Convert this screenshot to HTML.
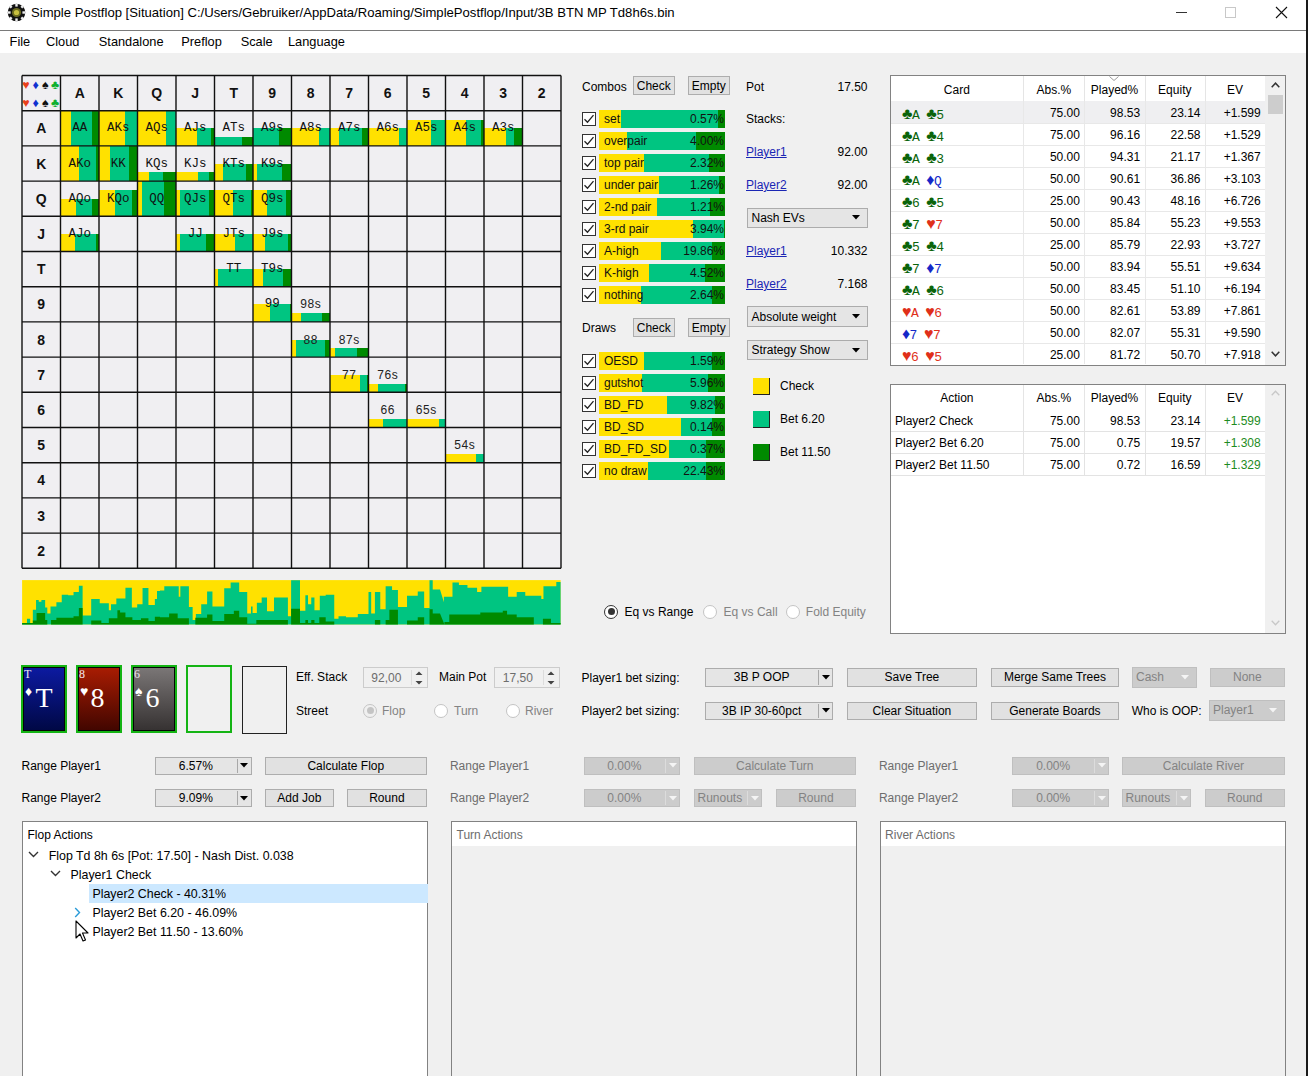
<!DOCTYPE html><html><head><meta charset="utf-8"><style>
html,body{margin:0;padding:0;width:1308px;height:1080px;overflow:hidden;background:#fff;}
body{position:relative;font-family:"Liberation Sans",sans-serif;}
div{box-sizing:border-box;}
</style></head><body>
<div style="position:absolute;left:0px;top:53px;width:1306px;height:1023px;background:#f0f0f0;"></div>
<div style="position:absolute;left:1306px;top:0px;width:2px;height:1076px;background:#1a1a1a;"></div>
<div style="position:absolute;left:0px;top:30px;width:1306px;height:1px;background:#7a7a7a;"></div>
<svg style="position:absolute;left:7px;top:3px" width="19" height="19" viewBox="0 0 19 19">
<circle cx="9.5" cy="9.5" r="8.8" fill="#111"/>
<g fill="#eee"><rect x="8.3" y="0.6" width="2.4" height="3"/><rect x="8.3" y="15.4" width="2.4" height="3"/>
<rect x="0.6" y="8.3" width="3" height="2.4"/><rect x="15.4" y="8.3" width="3" height="2.4"/>
<rect x="2.6" y="2.6" width="2.4" height="2.4" transform="rotate(45 3.8 3.8)"/><rect x="14" y="2.6" width="2.4" height="2.4" transform="rotate(45 15.2 3.8)"/>
<rect x="2.6" y="14" width="2.4" height="2.4" transform="rotate(45 3.8 15.2)"/><rect x="14" y="14" width="2.4" height="2.4" transform="rotate(45 15.2 15.2)"/></g>
<circle cx="9.5" cy="9.5" r="4.6" fill="#6a6a20"/><circle cx="9.5" cy="9.5" r="2.6" fill="#c8c040"/>
</svg>
<div style="position:absolute;left:31px;top:3.0px;height:20px;line-height:20px;font-family:'Liberation Sans', sans-serif;font-size:13.1px;color:#000;font-weight:400;white-space:pre;">Simple Postflop [Situation] C:/Users/Gebruiker/AppData/Roaming/SimplePostflop/Input/3B BTN MP Td8h6s.bin</div>
<div style="position:absolute;left:1176px;top:12px;width:11px;height:1px;background:#333;"></div>
<div style="position:absolute;left:1225px;top:7px;width:11px;height:11px;border:1px solid #c8c8c8;"></div>
<svg style="position:absolute;left:1275px;top:6px" width="13" height="13" viewBox="0 0 13 13"><path d="M1 1L12 12M12 1L1 12" stroke="#111" stroke-width="1.1"/></svg>
<div style="position:absolute;left:9.6px;top:32.0px;height:20px;line-height:20px;font-family:'Liberation Sans', sans-serif;font-size:12.8px;color:#000;font-weight:400;white-space:pre;">File</div>
<div style="position:absolute;left:46px;top:32.0px;height:20px;line-height:20px;font-family:'Liberation Sans', sans-serif;font-size:12.8px;color:#000;font-weight:400;white-space:pre;">Cloud</div>
<div style="position:absolute;left:98.8px;top:32.0px;height:20px;line-height:20px;font-family:'Liberation Sans', sans-serif;font-size:12.8px;color:#000;font-weight:400;white-space:pre;">Standalone</div>
<div style="position:absolute;left:181.3px;top:32.0px;height:20px;line-height:20px;font-family:'Liberation Sans', sans-serif;font-size:12.8px;color:#000;font-weight:400;white-space:pre;">Preflop</div>
<div style="position:absolute;left:240.7px;top:32.0px;height:20px;line-height:20px;font-family:'Liberation Sans', sans-serif;font-size:12.8px;color:#000;font-weight:400;white-space:pre;">Scale</div>
<div style="position:absolute;left:288px;top:32.0px;height:20px;line-height:20px;font-family:'Liberation Sans', sans-serif;font-size:12.8px;color:#000;font-weight:400;white-space:pre;">Language</div>
<div style="position:absolute;left:22.0px;top:75.5px;width:539.0px;height:492.80000000000007px;background:#f0eff2;"></div>
<div style="position:absolute;left:60.5px;top:110.7px;width:38.5px;height:35.2px;background:#008a00;"></div>
<div style="position:absolute;left:60.5px;top:110.7px;width:31.95px;height:35.2px;background:#00c581;"></div>
<div style="position:absolute;left:60.5px;top:110.7px;width:10.78px;height:35.2px;background:#ffe100;"></div>
<div style="position:absolute;left:99.0px;top:110.7px;width:38.5px;height:35.2px;background:#008a00;"></div>
<div style="position:absolute;left:99.0px;top:110.7px;width:38.12px;height:35.2px;background:#00c581;"></div>
<div style="position:absolute;left:99.0px;top:110.7px;width:25.8px;height:35.2px;background:#ffe100;"></div>
<div style="position:absolute;left:137.5px;top:110.7px;width:38.5px;height:35.2px;background:#00c581;"></div>
<div style="position:absolute;left:137.5px;top:110.7px;width:28.88px;height:35.2px;background:#ffe100;"></div>
<div style="position:absolute;left:176.0px;top:128.3px;width:38.5px;height:17.6px;background:#008a00;"></div>
<div style="position:absolute;left:176.0px;top:128.3px;width:35.42px;height:17.6px;background:#00c581;"></div>
<div style="position:absolute;left:176.0px;top:128.3px;width:20.79px;height:17.6px;background:#ffe100;"></div>
<div style="position:absolute;left:214.5px;top:137.1px;width:38.5px;height:8.8px;background:#008a00;"></div>
<div style="position:absolute;left:214.5px;top:137.1px;width:27.72px;height:8.8px;background:#00c581;"></div>
<div style="position:absolute;left:253.0px;top:128.3px;width:38.5px;height:17.6px;background:#008a00;"></div>
<div style="position:absolute;left:253.0px;top:128.3px;width:26.18px;height:17.6px;background:#00c581;"></div>
<div style="position:absolute;left:291.5px;top:128.3px;width:38.5px;height:17.6px;background:#00c581;"></div>
<div style="position:absolute;left:291.5px;top:128.3px;width:27.33px;height:17.6px;background:#ffe100;"></div>
<div style="position:absolute;left:330.0px;top:128.3px;width:38.5px;height:17.6px;background:#008a00;"></div>
<div style="position:absolute;left:330.0px;top:128.3px;width:31.95px;height:17.6px;background:#00c581;"></div>
<div style="position:absolute;left:330.0px;top:128.3px;width:9.24px;height:17.6px;background:#ffe100;"></div>
<div style="position:absolute;left:368.5px;top:128.3px;width:38.5px;height:17.6px;background:#00c581;"></div>
<div style="position:absolute;left:368.5px;top:128.3px;width:30.8px;height:17.6px;background:#ffe100;"></div>
<div style="position:absolute;left:407.0px;top:119.5px;width:38.5px;height:26.4px;background:#00c581;"></div>
<div style="position:absolute;left:407.0px;top:119.5px;width:23.87px;height:26.4px;background:#ffe100;"></div>
<div style="position:absolute;left:445.5px;top:119.5px;width:38.5px;height:26.4px;background:#008a00;"></div>
<div style="position:absolute;left:445.5px;top:119.5px;width:35.42px;height:26.4px;background:#00c581;"></div>
<div style="position:absolute;left:445.5px;top:119.5px;width:20.79px;height:26.4px;background:#ffe100;"></div>
<div style="position:absolute;left:484.0px;top:128.3px;width:38.5px;height:17.6px;background:#008a00;"></div>
<div style="position:absolute;left:484.0px;top:128.3px;width:30.42px;height:17.6px;background:#00c581;"></div>
<div style="position:absolute;left:484.0px;top:128.3px;width:21.56px;height:17.6px;background:#ffe100;"></div>
<div style="position:absolute;left:60.5px;top:145.9px;width:38.5px;height:35.2px;background:#008a00;"></div>
<div style="position:absolute;left:60.5px;top:145.9px;width:35.04px;height:35.2px;background:#00c581;"></div>
<div style="position:absolute;left:60.5px;top:145.9px;width:18.09px;height:35.2px;background:#ffe100;"></div>
<div style="position:absolute;left:99.0px;top:145.9px;width:38.5px;height:35.2px;background:#008a00;"></div>
<div style="position:absolute;left:99.0px;top:145.9px;width:30.03px;height:35.2px;background:#00c581;"></div>
<div style="position:absolute;left:99.0px;top:145.9px;width:10.78px;height:35.2px;background:#ffe100;"></div>
<div style="position:absolute;left:137.5px;top:172.3px;width:38.5px;height:8.8px;background:#008a00;"></div>
<div style="position:absolute;left:137.5px;top:172.3px;width:25.8px;height:8.8px;background:#00c581;"></div>
<div style="position:absolute;left:137.5px;top:172.3px;width:11.94px;height:8.8px;background:#ffe100;"></div>
<div style="position:absolute;left:176.0px;top:172.3px;width:38.5px;height:8.8px;background:#008a00;"></div>
<div style="position:absolute;left:176.0px;top:172.3px;width:33.11px;height:8.8px;background:#00c581;"></div>
<div style="position:absolute;left:176.0px;top:172.3px;width:21.94px;height:8.8px;background:#ffe100;"></div>
<div style="position:absolute;left:214.5px;top:163.5px;width:38.5px;height:17.6px;background:#008a00;"></div>
<div style="position:absolute;left:214.5px;top:163.5px;width:31.19px;height:17.6px;background:#00c581;"></div>
<div style="position:absolute;left:214.5px;top:163.5px;width:8.47px;height:17.6px;background:#ffe100;"></div>
<div style="position:absolute;left:253.0px;top:163.5px;width:38.5px;height:17.6px;background:#008a00;"></div>
<div style="position:absolute;left:253.0px;top:163.5px;width:28.88px;height:17.6px;background:#00c581;"></div>
<div style="position:absolute;left:253.0px;top:163.5px;width:4.24px;height:17.6px;background:#ffe100;"></div>
<div style="position:absolute;left:60.5px;top:198.7px;width:38.5px;height:17.6px;background:#008a00;"></div>
<div style="position:absolute;left:60.5px;top:198.7px;width:31.19px;height:17.6px;background:#00c581;"></div>
<div style="position:absolute;left:60.5px;top:198.7px;width:15.78px;height:17.6px;background:#ffe100;"></div>
<div style="position:absolute;left:99.0px;top:189.9px;width:38.5px;height:26.4px;background:#008a00;"></div>
<div style="position:absolute;left:99.0px;top:189.9px;width:33.11px;height:26.4px;background:#00c581;"></div>
<div style="position:absolute;left:99.0px;top:189.9px;width:16.17px;height:26.4px;background:#ffe100;"></div>
<div style="position:absolute;left:137.5px;top:181.1px;width:38.5px;height:35.2px;background:#008a00;"></div>
<div style="position:absolute;left:137.5px;top:181.1px;width:26.56px;height:35.2px;background:#00c581;"></div>
<div style="position:absolute;left:137.5px;top:181.1px;width:4.24px;height:35.2px;background:#ffe100;"></div>
<div style="position:absolute;left:176.0px;top:189.9px;width:38.5px;height:26.4px;background:#008a00;"></div>
<div style="position:absolute;left:176.0px;top:189.9px;width:33.11px;height:26.4px;background:#00c581;"></div>
<div style="position:absolute;left:176.0px;top:189.9px;width:3.85px;height:26.4px;background:#ffe100;"></div>
<div style="position:absolute;left:214.5px;top:189.9px;width:38.5px;height:26.4px;background:#008a00;"></div>
<div style="position:absolute;left:214.5px;top:189.9px;width:36.19px;height:26.4px;background:#00c581;"></div>
<div style="position:absolute;left:214.5px;top:189.9px;width:18.09px;height:26.4px;background:#ffe100;"></div>
<div style="position:absolute;left:253.0px;top:189.9px;width:38.5px;height:26.4px;background:#008a00;"></div>
<div style="position:absolute;left:253.0px;top:189.9px;width:33.11px;height:26.4px;background:#00c581;"></div>
<div style="position:absolute;left:253.0px;top:189.9px;width:13.86px;height:26.4px;background:#ffe100;"></div>
<div style="position:absolute;left:60.5px;top:233.9px;width:38.5px;height:17.6px;background:#008a00;"></div>
<div style="position:absolute;left:60.5px;top:233.9px;width:35.04px;height:17.6px;background:#00c581;"></div>
<div style="position:absolute;left:60.5px;top:233.9px;width:14.24px;height:17.6px;background:#ffe100;"></div>
<div style="position:absolute;left:176.0px;top:233.9px;width:38.5px;height:17.6px;background:#008a00;"></div>
<div style="position:absolute;left:176.0px;top:233.9px;width:30.03px;height:17.6px;background:#00c581;"></div>
<div style="position:absolute;left:176.0px;top:233.9px;width:3.85px;height:17.6px;background:#ffe100;"></div>
<div style="position:absolute;left:214.5px;top:233.9px;width:38.5px;height:17.6px;background:#00c581;"></div>
<div style="position:absolute;left:214.5px;top:233.9px;width:20.02px;height:17.6px;background:#ffe100;"></div>
<div style="position:absolute;left:253.0px;top:233.9px;width:38.5px;height:17.6px;background:#008a00;"></div>
<div style="position:absolute;left:253.0px;top:233.9px;width:35.42px;height:17.6px;background:#00c581;"></div>
<div style="position:absolute;left:253.0px;top:233.9px;width:11.94px;height:17.6px;background:#ffe100;"></div>
<div style="position:absolute;left:214.5px;top:269.1px;width:38.5px;height:17.6px;background:#00c581;"></div>
<div style="position:absolute;left:214.5px;top:269.1px;width:3.46px;height:17.6px;background:#ffe100;"></div>
<div style="position:absolute;left:253.0px;top:269.1px;width:38.5px;height:17.6px;background:#008a00;"></div>
<div style="position:absolute;left:253.0px;top:269.1px;width:30.03px;height:17.6px;background:#00c581;"></div>
<div style="position:absolute;left:253.0px;top:269.1px;width:9.62px;height:17.6px;background:#ffe100;"></div>
<div style="position:absolute;left:253.0px;top:304.3px;width:38.5px;height:17.6px;background:#008a00;"></div>
<div style="position:absolute;left:253.0px;top:304.3px;width:37.34px;height:17.6px;background:#00c581;"></div>
<div style="position:absolute;left:253.0px;top:304.3px;width:17.32px;height:17.6px;background:#ffe100;"></div>
<div style="position:absolute;left:291.5px;top:313.1px;width:38.5px;height:8.8px;background:#008a00;"></div>
<div style="position:absolute;left:291.5px;top:313.1px;width:30.42px;height:8.8px;background:#00c581;"></div>
<div style="position:absolute;left:291.5px;top:313.1px;width:9.24px;height:8.8px;background:#ffe100;"></div>
<div style="position:absolute;left:291.5px;top:339.5px;width:38.5px;height:17.6px;background:#008a00;"></div>
<div style="position:absolute;left:291.5px;top:339.5px;width:33.11px;height:17.6px;background:#00c581;"></div>
<div style="position:absolute;left:291.5px;top:339.5px;width:4.24px;height:17.6px;background:#ffe100;"></div>
<div style="position:absolute;left:330.0px;top:348.3px;width:38.5px;height:8.8px;background:#008a00;"></div>
<div style="position:absolute;left:330.0px;top:348.3px;width:27.33px;height:8.8px;background:#00c581;"></div>
<div style="position:absolute;left:330.0px;top:348.3px;width:5.39px;height:8.8px;background:#ffe100;"></div>
<div style="position:absolute;left:330.0px;top:374.7px;width:38.5px;height:17.6px;background:#008a00;"></div>
<div style="position:absolute;left:330.0px;top:374.7px;width:37.34px;height:17.6px;background:#00c581;"></div>
<div style="position:absolute;left:330.0px;top:374.7px;width:30.42px;height:17.6px;background:#ffe100;"></div>
<div style="position:absolute;left:368.5px;top:383.5px;width:38.5px;height:8.8px;background:#008a00;"></div>
<div style="position:absolute;left:368.5px;top:383.5px;width:36.57px;height:8.8px;background:#00c581;"></div>
<div style="position:absolute;left:368.5px;top:383.5px;width:9.62px;height:8.8px;background:#ffe100;"></div>
<div style="position:absolute;left:368.5px;top:418.7px;width:38.5px;height:8.8px;background:#00c581;"></div>
<div style="position:absolute;left:368.5px;top:418.7px;width:14.24px;height:8.8px;background:#ffe100;"></div>
<div style="position:absolute;left:407.0px;top:418.7px;width:38.5px;height:8.8px;background:#00c581;"></div>
<div style="position:absolute;left:407.0px;top:418.7px;width:32.34px;height:8.8px;background:#ffe100;"></div>
<div style="position:absolute;left:445.5px;top:453.9px;width:38.5px;height:8.8px;background:#00c581;"></div>
<div style="position:absolute;left:445.5px;top:453.9px;width:30.03px;height:8.8px;background:#ffe100;"></div>
<svg style="position:absolute;left:0;top:0" width="1308" height="1080"><g stroke="#111" stroke-width="1.4"><line x1="22.0" y1="75.5" x2="22.0" y2="568.3000000000001"/><line x1="22.0" y1="75.5" x2="561.0" y2="75.5"/><line x1="60.5" y1="75.5" x2="60.5" y2="568.3000000000001"/><line x1="22.0" y1="110.7" x2="561.0" y2="110.7"/><line x1="99.0" y1="75.5" x2="99.0" y2="568.3000000000001"/><line x1="22.0" y1="145.9" x2="561.0" y2="145.9"/><line x1="137.5" y1="75.5" x2="137.5" y2="568.3000000000001"/><line x1="22.0" y1="181.10000000000002" x2="561.0" y2="181.10000000000002"/><line x1="176.0" y1="75.5" x2="176.0" y2="568.3000000000001"/><line x1="22.0" y1="216.3" x2="561.0" y2="216.3"/><line x1="214.5" y1="75.5" x2="214.5" y2="568.3000000000001"/><line x1="22.0" y1="251.5" x2="561.0" y2="251.5"/><line x1="253.0" y1="75.5" x2="253.0" y2="568.3000000000001"/><line x1="22.0" y1="286.70000000000005" x2="561.0" y2="286.70000000000005"/><line x1="291.5" y1="75.5" x2="291.5" y2="568.3000000000001"/><line x1="22.0" y1="321.90000000000003" x2="561.0" y2="321.90000000000003"/><line x1="330.0" y1="75.5" x2="330.0" y2="568.3000000000001"/><line x1="22.0" y1="357.1" x2="561.0" y2="357.1"/><line x1="368.5" y1="75.5" x2="368.5" y2="568.3000000000001"/><line x1="22.0" y1="392.3" x2="561.0" y2="392.3"/><line x1="407.0" y1="75.5" x2="407.0" y2="568.3000000000001"/><line x1="22.0" y1="427.5" x2="561.0" y2="427.5"/><line x1="445.5" y1="75.5" x2="445.5" y2="568.3000000000001"/><line x1="22.0" y1="462.70000000000005" x2="561.0" y2="462.70000000000005"/><line x1="484.0" y1="75.5" x2="484.0" y2="568.3000000000001"/><line x1="22.0" y1="497.90000000000003" x2="561.0" y2="497.90000000000003"/><line x1="522.5" y1="75.5" x2="522.5" y2="568.3000000000001"/><line x1="22.0" y1="533.1" x2="561.0" y2="533.1"/><line x1="561.0" y1="75.5" x2="561.0" y2="568.3000000000001"/><line x1="22.0" y1="568.3000000000001" x2="561.0" y2="568.3000000000001"/></g></svg>
<div style="position:absolute;left:-120.25px;width:400px;top:118.30000000000001px;height:20px;line-height:20px;font-family:'Liberation Mono', monospace;font-size:12.5px;color:#111;font-weight:400;white-space:pre;text-align:center;">AA</div>
<div style="position:absolute;left:-81.75px;width:400px;top:118.30000000000001px;height:20px;line-height:20px;font-family:'Liberation Mono', monospace;font-size:12.5px;color:#111;font-weight:400;white-space:pre;text-align:center;">AKs</div>
<div style="position:absolute;left:-43.25px;width:400px;top:118.30000000000001px;height:20px;line-height:20px;font-family:'Liberation Mono', monospace;font-size:12.5px;color:#111;font-weight:400;white-space:pre;text-align:center;">AQs</div>
<div style="position:absolute;left:-4.75px;width:400px;top:118.30000000000001px;height:20px;line-height:20px;font-family:'Liberation Mono', monospace;font-size:12.5px;color:#111;font-weight:400;white-space:pre;text-align:center;">AJs</div>
<div style="position:absolute;left:33.75px;width:400px;top:118.30000000000001px;height:20px;line-height:20px;font-family:'Liberation Mono', monospace;font-size:12.5px;color:#111;font-weight:400;white-space:pre;text-align:center;">ATs</div>
<div style="position:absolute;left:72.25px;width:400px;top:118.30000000000001px;height:20px;line-height:20px;font-family:'Liberation Mono', monospace;font-size:12.5px;color:#111;font-weight:400;white-space:pre;text-align:center;">A9s</div>
<div style="position:absolute;left:110.75px;width:400px;top:118.30000000000001px;height:20px;line-height:20px;font-family:'Liberation Mono', monospace;font-size:12.5px;color:#111;font-weight:400;white-space:pre;text-align:center;">A8s</div>
<div style="position:absolute;left:149.25px;width:400px;top:118.30000000000001px;height:20px;line-height:20px;font-family:'Liberation Mono', monospace;font-size:12.5px;color:#111;font-weight:400;white-space:pre;text-align:center;">A7s</div>
<div style="position:absolute;left:187.75px;width:400px;top:118.30000000000001px;height:20px;line-height:20px;font-family:'Liberation Mono', monospace;font-size:12.5px;color:#111;font-weight:400;white-space:pre;text-align:center;">A6s</div>
<div style="position:absolute;left:226.25px;width:400px;top:118.30000000000001px;height:20px;line-height:20px;font-family:'Liberation Mono', monospace;font-size:12.5px;color:#111;font-weight:400;white-space:pre;text-align:center;">A5s</div>
<div style="position:absolute;left:264.75px;width:400px;top:118.30000000000001px;height:20px;line-height:20px;font-family:'Liberation Mono', monospace;font-size:12.5px;color:#111;font-weight:400;white-space:pre;text-align:center;">A4s</div>
<div style="position:absolute;left:303.25px;width:400px;top:118.30000000000001px;height:20px;line-height:20px;font-family:'Liberation Mono', monospace;font-size:12.5px;color:#111;font-weight:400;white-space:pre;text-align:center;">A3s</div>
<div style="position:absolute;left:-120.25px;width:400px;top:153.5px;height:20px;line-height:20px;font-family:'Liberation Mono', monospace;font-size:12.5px;color:#111;font-weight:400;white-space:pre;text-align:center;">AKo</div>
<div style="position:absolute;left:-81.75px;width:400px;top:153.5px;height:20px;line-height:20px;font-family:'Liberation Mono', monospace;font-size:12.5px;color:#111;font-weight:400;white-space:pre;text-align:center;">KK</div>
<div style="position:absolute;left:-43.25px;width:400px;top:153.5px;height:20px;line-height:20px;font-family:'Liberation Mono', monospace;font-size:12.5px;color:#111;font-weight:400;white-space:pre;text-align:center;">KQs</div>
<div style="position:absolute;left:-4.75px;width:400px;top:153.5px;height:20px;line-height:20px;font-family:'Liberation Mono', monospace;font-size:12.5px;color:#111;font-weight:400;white-space:pre;text-align:center;">KJs</div>
<div style="position:absolute;left:33.75px;width:400px;top:153.5px;height:20px;line-height:20px;font-family:'Liberation Mono', monospace;font-size:12.5px;color:#111;font-weight:400;white-space:pre;text-align:center;">KTs</div>
<div style="position:absolute;left:72.25px;width:400px;top:153.5px;height:20px;line-height:20px;font-family:'Liberation Mono', monospace;font-size:12.5px;color:#111;font-weight:400;white-space:pre;text-align:center;">K9s</div>
<div style="position:absolute;left:-120.25px;width:400px;top:188.70000000000002px;height:20px;line-height:20px;font-family:'Liberation Mono', monospace;font-size:12.5px;color:#111;font-weight:400;white-space:pre;text-align:center;">AQo</div>
<div style="position:absolute;left:-81.75px;width:400px;top:188.70000000000002px;height:20px;line-height:20px;font-family:'Liberation Mono', monospace;font-size:12.5px;color:#111;font-weight:400;white-space:pre;text-align:center;">KQo</div>
<div style="position:absolute;left:-43.25px;width:400px;top:188.70000000000002px;height:20px;line-height:20px;font-family:'Liberation Mono', monospace;font-size:12.5px;color:#111;font-weight:400;white-space:pre;text-align:center;">QQ</div>
<div style="position:absolute;left:-4.75px;width:400px;top:188.70000000000002px;height:20px;line-height:20px;font-family:'Liberation Mono', monospace;font-size:12.5px;color:#111;font-weight:400;white-space:pre;text-align:center;">QJs</div>
<div style="position:absolute;left:33.75px;width:400px;top:188.70000000000002px;height:20px;line-height:20px;font-family:'Liberation Mono', monospace;font-size:12.5px;color:#111;font-weight:400;white-space:pre;text-align:center;">QTs</div>
<div style="position:absolute;left:72.25px;width:400px;top:188.70000000000002px;height:20px;line-height:20px;font-family:'Liberation Mono', monospace;font-size:12.5px;color:#111;font-weight:400;white-space:pre;text-align:center;">Q9s</div>
<div style="position:absolute;left:-120.25px;width:400px;top:223.9px;height:20px;line-height:20px;font-family:'Liberation Mono', monospace;font-size:12.5px;color:#111;font-weight:400;white-space:pre;text-align:center;">AJo</div>
<div style="position:absolute;left:-4.75px;width:400px;top:223.9px;height:20px;line-height:20px;font-family:'Liberation Mono', monospace;font-size:12.5px;color:#111;font-weight:400;white-space:pre;text-align:center;">JJ</div>
<div style="position:absolute;left:33.75px;width:400px;top:223.9px;height:20px;line-height:20px;font-family:'Liberation Mono', monospace;font-size:12.5px;color:#111;font-weight:400;white-space:pre;text-align:center;">JTs</div>
<div style="position:absolute;left:72.25px;width:400px;top:223.9px;height:20px;line-height:20px;font-family:'Liberation Mono', monospace;font-size:12.5px;color:#111;font-weight:400;white-space:pre;text-align:center;">J9s</div>
<div style="position:absolute;left:33.75px;width:400px;top:259.1px;height:20px;line-height:20px;font-family:'Liberation Mono', monospace;font-size:12.5px;color:#111;font-weight:400;white-space:pre;text-align:center;">TT</div>
<div style="position:absolute;left:72.25px;width:400px;top:259.1px;height:20px;line-height:20px;font-family:'Liberation Mono', monospace;font-size:12.5px;color:#111;font-weight:400;white-space:pre;text-align:center;">T9s</div>
<div style="position:absolute;left:72.25px;width:400px;top:294.30000000000007px;height:20px;line-height:20px;font-family:'Liberation Mono', monospace;font-size:12.5px;color:#111;font-weight:400;white-space:pre;text-align:center;">99</div>
<div style="position:absolute;left:110.75px;width:400px;top:294.30000000000007px;height:20px;line-height:20px;font-family:'Liberation Sans', sans-serif;font-size:12px;color:#222;font-weight:400;white-space:pre;text-align:center;letter-spacing:0.5px;">98s</div>
<div style="position:absolute;left:110.75px;width:400px;top:329.50000000000006px;height:20px;line-height:20px;font-family:'Liberation Sans', sans-serif;font-size:12px;color:#222;font-weight:400;white-space:pre;text-align:center;letter-spacing:0.5px;">88</div>
<div style="position:absolute;left:149.25px;width:400px;top:329.50000000000006px;height:20px;line-height:20px;font-family:'Liberation Sans', sans-serif;font-size:12px;color:#222;font-weight:400;white-space:pre;text-align:center;letter-spacing:0.5px;">87s</div>
<div style="position:absolute;left:149.25px;width:400px;top:364.70000000000005px;height:20px;line-height:20px;font-family:'Liberation Sans', sans-serif;font-size:12px;color:#222;font-weight:400;white-space:pre;text-align:center;letter-spacing:0.5px;">77</div>
<div style="position:absolute;left:187.75px;width:400px;top:364.70000000000005px;height:20px;line-height:20px;font-family:'Liberation Sans', sans-serif;font-size:12px;color:#222;font-weight:400;white-space:pre;text-align:center;letter-spacing:0.5px;">76s</div>
<div style="position:absolute;left:187.75px;width:400px;top:399.90000000000003px;height:20px;line-height:20px;font-family:'Liberation Sans', sans-serif;font-size:12px;color:#222;font-weight:400;white-space:pre;text-align:center;letter-spacing:0.5px;">66</div>
<div style="position:absolute;left:226.25px;width:400px;top:399.90000000000003px;height:20px;line-height:20px;font-family:'Liberation Sans', sans-serif;font-size:12px;color:#222;font-weight:400;white-space:pre;text-align:center;letter-spacing:0.5px;">65s</div>
<div style="position:absolute;left:264.75px;width:400px;top:435.1px;height:20px;line-height:20px;font-family:'Liberation Sans', sans-serif;font-size:12px;color:#222;font-weight:400;white-space:pre;text-align:center;letter-spacing:0.5px;">54s</div>
<div style="position:absolute;left:-120.25px;width:400px;top:83.1px;height:20px;line-height:20px;font-family:'Liberation Sans', sans-serif;font-size:14px;color:#111;font-weight:700;white-space:pre;text-align:center;">A</div>
<div style="position:absolute;left:-158.75px;width:400px;top:118.30000000000001px;height:20px;line-height:20px;font-family:'Liberation Sans', sans-serif;font-size:14px;color:#111;font-weight:700;white-space:pre;text-align:center;">A</div>
<div style="position:absolute;left:-81.75px;width:400px;top:83.1px;height:20px;line-height:20px;font-family:'Liberation Sans', sans-serif;font-size:14px;color:#111;font-weight:700;white-space:pre;text-align:center;">K</div>
<div style="position:absolute;left:-158.75px;width:400px;top:153.5px;height:20px;line-height:20px;font-family:'Liberation Sans', sans-serif;font-size:14px;color:#111;font-weight:700;white-space:pre;text-align:center;">K</div>
<div style="position:absolute;left:-43.25px;width:400px;top:83.1px;height:20px;line-height:20px;font-family:'Liberation Sans', sans-serif;font-size:14px;color:#111;font-weight:700;white-space:pre;text-align:center;">Q</div>
<div style="position:absolute;left:-158.75px;width:400px;top:188.70000000000002px;height:20px;line-height:20px;font-family:'Liberation Sans', sans-serif;font-size:14px;color:#111;font-weight:700;white-space:pre;text-align:center;">Q</div>
<div style="position:absolute;left:-4.75px;width:400px;top:83.1px;height:20px;line-height:20px;font-family:'Liberation Sans', sans-serif;font-size:14px;color:#111;font-weight:700;white-space:pre;text-align:center;">J</div>
<div style="position:absolute;left:-158.75px;width:400px;top:223.9px;height:20px;line-height:20px;font-family:'Liberation Sans', sans-serif;font-size:14px;color:#111;font-weight:700;white-space:pre;text-align:center;">J</div>
<div style="position:absolute;left:33.75px;width:400px;top:83.1px;height:20px;line-height:20px;font-family:'Liberation Sans', sans-serif;font-size:14px;color:#111;font-weight:700;white-space:pre;text-align:center;">T</div>
<div style="position:absolute;left:-158.75px;width:400px;top:259.1px;height:20px;line-height:20px;font-family:'Liberation Sans', sans-serif;font-size:14px;color:#111;font-weight:700;white-space:pre;text-align:center;">T</div>
<div style="position:absolute;left:72.25px;width:400px;top:83.1px;height:20px;line-height:20px;font-family:'Liberation Sans', sans-serif;font-size:14px;color:#111;font-weight:700;white-space:pre;text-align:center;">9</div>
<div style="position:absolute;left:-158.75px;width:400px;top:294.30000000000007px;height:20px;line-height:20px;font-family:'Liberation Sans', sans-serif;font-size:14px;color:#111;font-weight:700;white-space:pre;text-align:center;">9</div>
<div style="position:absolute;left:110.75px;width:400px;top:83.1px;height:20px;line-height:20px;font-family:'Liberation Sans', sans-serif;font-size:14px;color:#111;font-weight:700;white-space:pre;text-align:center;">8</div>
<div style="position:absolute;left:-158.75px;width:400px;top:329.50000000000006px;height:20px;line-height:20px;font-family:'Liberation Sans', sans-serif;font-size:14px;color:#111;font-weight:700;white-space:pre;text-align:center;">8</div>
<div style="position:absolute;left:149.25px;width:400px;top:83.1px;height:20px;line-height:20px;font-family:'Liberation Sans', sans-serif;font-size:14px;color:#111;font-weight:700;white-space:pre;text-align:center;">7</div>
<div style="position:absolute;left:-158.75px;width:400px;top:364.70000000000005px;height:20px;line-height:20px;font-family:'Liberation Sans', sans-serif;font-size:14px;color:#111;font-weight:700;white-space:pre;text-align:center;">7</div>
<div style="position:absolute;left:187.75px;width:400px;top:83.1px;height:20px;line-height:20px;font-family:'Liberation Sans', sans-serif;font-size:14px;color:#111;font-weight:700;white-space:pre;text-align:center;">6</div>
<div style="position:absolute;left:-158.75px;width:400px;top:399.90000000000003px;height:20px;line-height:20px;font-family:'Liberation Sans', sans-serif;font-size:14px;color:#111;font-weight:700;white-space:pre;text-align:center;">6</div>
<div style="position:absolute;left:226.25px;width:400px;top:83.1px;height:20px;line-height:20px;font-family:'Liberation Sans', sans-serif;font-size:14px;color:#111;font-weight:700;white-space:pre;text-align:center;">5</div>
<div style="position:absolute;left:-158.75px;width:400px;top:435.1px;height:20px;line-height:20px;font-family:'Liberation Sans', sans-serif;font-size:14px;color:#111;font-weight:700;white-space:pre;text-align:center;">5</div>
<div style="position:absolute;left:264.75px;width:400px;top:83.1px;height:20px;line-height:20px;font-family:'Liberation Sans', sans-serif;font-size:14px;color:#111;font-weight:700;white-space:pre;text-align:center;">4</div>
<div style="position:absolute;left:-158.75px;width:400px;top:470.30000000000007px;height:20px;line-height:20px;font-family:'Liberation Sans', sans-serif;font-size:14px;color:#111;font-weight:700;white-space:pre;text-align:center;">4</div>
<div style="position:absolute;left:303.25px;width:400px;top:83.1px;height:20px;line-height:20px;font-family:'Liberation Sans', sans-serif;font-size:14px;color:#111;font-weight:700;white-space:pre;text-align:center;">3</div>
<div style="position:absolute;left:-158.75px;width:400px;top:505.5px;height:20px;line-height:20px;font-family:'Liberation Sans', sans-serif;font-size:14px;color:#111;font-weight:700;white-space:pre;text-align:center;">3</div>
<div style="position:absolute;left:341.75px;width:400px;top:83.1px;height:20px;line-height:20px;font-family:'Liberation Sans', sans-serif;font-size:14px;color:#111;font-weight:700;white-space:pre;text-align:center;">2</div>
<div style="position:absolute;left:-158.75px;width:400px;top:540.7px;height:20px;line-height:20px;font-family:'Liberation Sans', sans-serif;font-size:14px;color:#111;font-weight:700;white-space:pre;text-align:center;">2</div>
<div style="position:absolute;left:-174.0px;width:400px;top:75.0px;height:20px;line-height:20px;font-family:'Liberation Sans', sans-serif;font-size:12.5px;color:#e8401a;font-weight:400;white-space:pre;text-align:center;">&#9829;</div>
<div style="position:absolute;left:-174.0px;width:400px;top:92.5px;height:20px;line-height:20px;font-family:'Liberation Sans', sans-serif;font-size:12.5px;color:#e8401a;font-weight:400;white-space:pre;text-align:center;">&#9829;</div>
<div style="position:absolute;left:-164.3px;width:400px;top:75.0px;height:20px;line-height:20px;font-family:'Liberation Sans', sans-serif;font-size:12.5px;color:#1030d0;font-weight:400;white-space:pre;text-align:center;">&#9830;</div>
<div style="position:absolute;left:-164.3px;width:400px;top:92.5px;height:20px;line-height:20px;font-family:'Liberation Sans', sans-serif;font-size:12.5px;color:#1030d0;font-weight:400;white-space:pre;text-align:center;">&#9830;</div>
<div style="position:absolute;left:-154.6px;width:400px;top:75.0px;height:20px;line-height:20px;font-family:'Liberation Sans', sans-serif;font-size:12.5px;color:#111;font-weight:400;white-space:pre;text-align:center;">&#9824;</div>
<div style="position:absolute;left:-154.6px;width:400px;top:92.5px;height:20px;line-height:20px;font-family:'Liberation Sans', sans-serif;font-size:12.5px;color:#111;font-weight:400;white-space:pre;text-align:center;">&#9824;</div>
<div style="position:absolute;left:-144.9px;width:400px;top:75.0px;height:20px;line-height:20px;font-family:'Liberation Sans', sans-serif;font-size:12.5px;color:#10b030;font-weight:400;white-space:pre;text-align:center;">&#9827;</div>
<div style="position:absolute;left:-144.9px;width:400px;top:92.5px;height:20px;line-height:20px;font-family:'Liberation Sans', sans-serif;font-size:12.5px;color:#10b030;font-weight:400;white-space:pre;text-align:center;">&#9827;</div>
<div style="position:absolute;left:582px;top:76.6px;height:20px;line-height:20px;font-family:'Liberation Sans', sans-serif;font-size:12px;color:#000;font-weight:400;white-space:pre;">Combos</div>
<div style="position:absolute;left:633px;top:76.4px;width:41.5px;height:19.0px;background:#e1e1e1;border:1px solid #adadad;"></div>
<div style="position:absolute;left:453.75px;width:400px;top:75.9px;height:20px;line-height:20px;font-family:'Liberation Sans', sans-serif;font-size:12px;color:#000;font-weight:400;white-space:pre;text-align:center;">Check</div>
<div style="position:absolute;left:688px;top:76.4px;width:41.5px;height:19.0px;background:#e1e1e1;border:1px solid #adadad;"></div>
<div style="position:absolute;left:508.75px;width:400px;top:75.9px;height:20px;line-height:20px;font-family:'Liberation Sans', sans-serif;font-size:12px;color:#000;font-weight:400;white-space:pre;text-align:center;">Empty</div>
<div style="position:absolute;left:746px;top:76.6px;height:20px;line-height:20px;font-family:'Liberation Sans', sans-serif;font-size:12px;color:#000;font-weight:400;white-space:pre;">Pot</div>
<div style="position:absolute;right:440.5px;top:76.6px;height:20px;line-height:20px;font-family:'Liberation Sans', sans-serif;font-size:12px;color:#000;font-weight:400;white-space:pre;text-align:right;">17.50</div>
<div style="position:absolute;left:582px;top:112px;width:14px;height:14px;background:#fff;border:1px solid #333;"></div>
<svg style="position:absolute;left:582px;top:112px" width="14" height="14" viewBox="0 0 14 14"><path d="M2.5 7.2L5.5 10.2L11.5 3.2" stroke="#222" stroke-width="1.3" fill="none"/></svg>
<div style="position:absolute;left:599px;top:110.2px;width:126px;height:17.6px;background:#008a00;"></div>
<div style="position:absolute;left:599px;top:110.2px;width:119px;height:17.6px;background:#00c581;"></div>
<div style="position:absolute;left:599px;top:110.2px;width:22px;height:17.6px;background:#ffe100;"></div>
<div style="position:absolute;left:604px;top:109.0px;height:20px;line-height:20px;font-family:'Liberation Sans', sans-serif;font-size:12px;color:#111;font-weight:400;white-space:pre;">set</div>
<div style="position:absolute;right:584px;top:109.0px;height:20px;line-height:20px;font-family:'Liberation Sans', sans-serif;font-size:12px;color:#111;font-weight:400;white-space:pre;text-align:right;">0.57%</div>
<div style="position:absolute;left:582px;top:134px;width:14px;height:14px;background:#fff;border:1px solid #333;"></div>
<svg style="position:absolute;left:582px;top:134px" width="14" height="14" viewBox="0 0 14 14"><path d="M2.5 7.2L5.5 10.2L11.5 3.2" stroke="#222" stroke-width="1.3" fill="none"/></svg>
<div style="position:absolute;left:599px;top:132.2px;width:126px;height:17.6px;background:#008a00;"></div>
<div style="position:absolute;left:599px;top:132.2px;width:96.60000000000002px;height:17.6px;background:#00c581;"></div>
<div style="position:absolute;left:599px;top:132.2px;width:28px;height:17.6px;background:#ffe100;"></div>
<div style="position:absolute;left:604px;top:131.0px;height:20px;line-height:20px;font-family:'Liberation Sans', sans-serif;font-size:12px;color:#111;font-weight:400;white-space:pre;">overpair</div>
<div style="position:absolute;right:584px;top:131.0px;height:20px;line-height:20px;font-family:'Liberation Sans', sans-serif;font-size:12px;color:#111;font-weight:400;white-space:pre;text-align:right;">4.00%</div>
<div style="position:absolute;left:582px;top:156px;width:14px;height:14px;background:#fff;border:1px solid #333;"></div>
<svg style="position:absolute;left:582px;top:156px" width="14" height="14" viewBox="0 0 14 14"><path d="M2.5 7.2L5.5 10.2L11.5 3.2" stroke="#222" stroke-width="1.3" fill="none"/></svg>
<div style="position:absolute;left:599px;top:154.2px;width:126px;height:17.6px;background:#008a00;"></div>
<div style="position:absolute;left:599px;top:154.2px;width:109.70000000000005px;height:17.6px;background:#00c581;"></div>
<div style="position:absolute;left:599px;top:154.2px;width:44.5px;height:17.6px;background:#ffe100;"></div>
<div style="position:absolute;left:604px;top:153.0px;height:20px;line-height:20px;font-family:'Liberation Sans', sans-serif;font-size:12px;color:#111;font-weight:400;white-space:pre;">top pair</div>
<div style="position:absolute;right:584px;top:153.0px;height:20px;line-height:20px;font-family:'Liberation Sans', sans-serif;font-size:12px;color:#111;font-weight:400;white-space:pre;text-align:right;">2.32%</div>
<div style="position:absolute;left:582px;top:178px;width:14px;height:14px;background:#fff;border:1px solid #333;"></div>
<svg style="position:absolute;left:582px;top:178px" width="14" height="14" viewBox="0 0 14 14"><path d="M2.5 7.2L5.5 10.2L11.5 3.2" stroke="#222" stroke-width="1.3" fill="none"/></svg>
<div style="position:absolute;left:599px;top:176.2px;width:126px;height:17.6px;background:#008a00;"></div>
<div style="position:absolute;left:599px;top:176.2px;width:119.79999999999995px;height:17.6px;background:#00c581;"></div>
<div style="position:absolute;left:599px;top:176.2px;width:60px;height:17.6px;background:#ffe100;"></div>
<div style="position:absolute;left:604px;top:175.0px;height:20px;line-height:20px;font-family:'Liberation Sans', sans-serif;font-size:12px;color:#111;font-weight:400;white-space:pre;">under pair</div>
<div style="position:absolute;right:584px;top:175.0px;height:20px;line-height:20px;font-family:'Liberation Sans', sans-serif;font-size:12px;color:#111;font-weight:400;white-space:pre;text-align:right;">1.26%</div>
<div style="position:absolute;left:582px;top:200px;width:14px;height:14px;background:#fff;border:1px solid #333;"></div>
<svg style="position:absolute;left:582px;top:200px" width="14" height="14" viewBox="0 0 14 14"><path d="M2.5 7.2L5.5 10.2L11.5 3.2" stroke="#222" stroke-width="1.3" fill="none"/></svg>
<div style="position:absolute;left:599px;top:198.2px;width:126px;height:17.6px;background:#008a00;"></div>
<div style="position:absolute;left:599px;top:198.2px;width:111px;height:17.6px;background:#00c581;"></div>
<div style="position:absolute;left:599px;top:198.2px;width:57.5px;height:17.6px;background:#ffe100;"></div>
<div style="position:absolute;left:604px;top:197.0px;height:20px;line-height:20px;font-family:'Liberation Sans', sans-serif;font-size:12px;color:#111;font-weight:400;white-space:pre;">2-nd pair</div>
<div style="position:absolute;right:584px;top:197.0px;height:20px;line-height:20px;font-family:'Liberation Sans', sans-serif;font-size:12px;color:#111;font-weight:400;white-space:pre;text-align:right;">1.21%</div>
<div style="position:absolute;left:582px;top:222px;width:14px;height:14px;background:#fff;border:1px solid #333;"></div>
<svg style="position:absolute;left:582px;top:222px" width="14" height="14" viewBox="0 0 14 14"><path d="M2.5 7.2L5.5 10.2L11.5 3.2" stroke="#222" stroke-width="1.3" fill="none"/></svg>
<div style="position:absolute;left:599px;top:220.2px;width:126px;height:17.6px;background:#008a00;"></div>
<div style="position:absolute;left:599px;top:220.2px;width:125px;height:17.6px;background:#00c581;"></div>
<div style="position:absolute;left:599px;top:220.2px;width:93.79999999999995px;height:17.6px;background:#ffe100;"></div>
<div style="position:absolute;left:604px;top:219.0px;height:20px;line-height:20px;font-family:'Liberation Sans', sans-serif;font-size:12px;color:#111;font-weight:400;white-space:pre;">3-rd pair</div>
<div style="position:absolute;right:584px;top:219.0px;height:20px;line-height:20px;font-family:'Liberation Sans', sans-serif;font-size:12px;color:#111;font-weight:400;white-space:pre;text-align:right;">3.94%</div>
<div style="position:absolute;left:582px;top:244px;width:14px;height:14px;background:#fff;border:1px solid #333;"></div>
<svg style="position:absolute;left:582px;top:244px" width="14" height="14" viewBox="0 0 14 14"><path d="M2.5 7.2L5.5 10.2L11.5 3.2" stroke="#222" stroke-width="1.3" fill="none"/></svg>
<div style="position:absolute;left:599px;top:242.2px;width:126px;height:17.6px;background:#008a00;"></div>
<div style="position:absolute;left:599px;top:242.2px;width:112.5px;height:17.6px;background:#00c581;"></div>
<div style="position:absolute;left:599px;top:242.2px;width:61.799999999999955px;height:17.6px;background:#ffe100;"></div>
<div style="position:absolute;left:604px;top:241.0px;height:20px;line-height:20px;font-family:'Liberation Sans', sans-serif;font-size:12px;color:#111;font-weight:400;white-space:pre;">A-high</div>
<div style="position:absolute;right:584px;top:241.0px;height:20px;line-height:20px;font-family:'Liberation Sans', sans-serif;font-size:12px;color:#111;font-weight:400;white-space:pre;text-align:right;">19.86%</div>
<div style="position:absolute;left:582px;top:266px;width:14px;height:14px;background:#fff;border:1px solid #333;"></div>
<svg style="position:absolute;left:582px;top:266px" width="14" height="14" viewBox="0 0 14 14"><path d="M2.5 7.2L5.5 10.2L11.5 3.2" stroke="#222" stroke-width="1.3" fill="none"/></svg>
<div style="position:absolute;left:599px;top:264.2px;width:126px;height:17.6px;background:#008a00;"></div>
<div style="position:absolute;left:599px;top:264.2px;width:106px;height:17.6px;background:#00c581;"></div>
<div style="position:absolute;left:599px;top:264.2px;width:50px;height:17.6px;background:#ffe100;"></div>
<div style="position:absolute;left:604px;top:263.0px;height:20px;line-height:20px;font-family:'Liberation Sans', sans-serif;font-size:12px;color:#111;font-weight:400;white-space:pre;">K-high</div>
<div style="position:absolute;right:584px;top:263.0px;height:20px;line-height:20px;font-family:'Liberation Sans', sans-serif;font-size:12px;color:#111;font-weight:400;white-space:pre;text-align:right;">4.52%</div>
<div style="position:absolute;left:582px;top:288px;width:14px;height:14px;background:#fff;border:1px solid #333;"></div>
<svg style="position:absolute;left:582px;top:288px" width="14" height="14" viewBox="0 0 14 14"><path d="M2.5 7.2L5.5 10.2L11.5 3.2" stroke="#222" stroke-width="1.3" fill="none"/></svg>
<div style="position:absolute;left:599px;top:286.2px;width:126px;height:17.6px;background:#008a00;"></div>
<div style="position:absolute;left:599px;top:286.2px;width:112.5px;height:17.6px;background:#00c581;"></div>
<div style="position:absolute;left:599px;top:286.2px;width:42px;height:17.6px;background:#ffe100;"></div>
<div style="position:absolute;left:604px;top:285.0px;height:20px;line-height:20px;font-family:'Liberation Sans', sans-serif;font-size:12px;color:#111;font-weight:400;white-space:pre;">nothing</div>
<div style="position:absolute;right:584px;top:285.0px;height:20px;line-height:20px;font-family:'Liberation Sans', sans-serif;font-size:12px;color:#111;font-weight:400;white-space:pre;text-align:right;">2.64%</div>
<div style="position:absolute;left:582px;top:318.0px;height:20px;line-height:20px;font-family:'Liberation Sans', sans-serif;font-size:12px;color:#000;font-weight:400;white-space:pre;">Draws</div>
<div style="position:absolute;left:633px;top:318px;width:41.5px;height:19px;background:#e1e1e1;border:1px solid #adadad;"></div>
<div style="position:absolute;left:453.75px;width:400px;top:317.5px;height:20px;line-height:20px;font-family:'Liberation Sans', sans-serif;font-size:12px;color:#000;font-weight:400;white-space:pre;text-align:center;">Check</div>
<div style="position:absolute;left:688px;top:318px;width:41.5px;height:19px;background:#e1e1e1;border:1px solid #adadad;"></div>
<div style="position:absolute;left:508.75px;width:400px;top:317.5px;height:20px;line-height:20px;font-family:'Liberation Sans', sans-serif;font-size:12px;color:#000;font-weight:400;white-space:pre;text-align:center;">Empty</div>
<div style="position:absolute;left:582px;top:354px;width:14px;height:14px;background:#fff;border:1px solid #333;"></div>
<svg style="position:absolute;left:582px;top:354px" width="14" height="14" viewBox="0 0 14 14"><path d="M2.5 7.2L5.5 10.2L11.5 3.2" stroke="#222" stroke-width="1.3" fill="none"/></svg>
<div style="position:absolute;left:599px;top:352.2px;width:126px;height:17.6px;background:#008a00;"></div>
<div style="position:absolute;left:599px;top:352.2px;width:112.5px;height:17.6px;background:#00c581;"></div>
<div style="position:absolute;left:599px;top:352.2px;width:45px;height:17.6px;background:#ffe100;"></div>
<div style="position:absolute;left:604px;top:351.0px;height:20px;line-height:20px;font-family:'Liberation Sans', sans-serif;font-size:12px;color:#111;font-weight:400;white-space:pre;">OESD</div>
<div style="position:absolute;right:584px;top:351.0px;height:20px;line-height:20px;font-family:'Liberation Sans', sans-serif;font-size:12px;color:#111;font-weight:400;white-space:pre;text-align:right;">1.59%</div>
<div style="position:absolute;left:582px;top:376px;width:14px;height:14px;background:#fff;border:1px solid #333;"></div>
<svg style="position:absolute;left:582px;top:376px" width="14" height="14" viewBox="0 0 14 14"><path d="M2.5 7.2L5.5 10.2L11.5 3.2" stroke="#222" stroke-width="1.3" fill="none"/></svg>
<div style="position:absolute;left:599px;top:374.2px;width:126px;height:17.6px;background:#008a00;"></div>
<div style="position:absolute;left:599px;top:374.2px;width:109px;height:17.6px;background:#00c581;"></div>
<div style="position:absolute;left:599px;top:374.2px;width:43px;height:17.6px;background:#ffe100;"></div>
<div style="position:absolute;left:604px;top:373.0px;height:20px;line-height:20px;font-family:'Liberation Sans', sans-serif;font-size:12px;color:#111;font-weight:400;white-space:pre;">gutshot</div>
<div style="position:absolute;right:584px;top:373.0px;height:20px;line-height:20px;font-family:'Liberation Sans', sans-serif;font-size:12px;color:#111;font-weight:400;white-space:pre;text-align:right;">5.96%</div>
<div style="position:absolute;left:582px;top:398px;width:14px;height:14px;background:#fff;border:1px solid #333;"></div>
<svg style="position:absolute;left:582px;top:398px" width="14" height="14" viewBox="0 0 14 14"><path d="M2.5 7.2L5.5 10.2L11.5 3.2" stroke="#222" stroke-width="1.3" fill="none"/></svg>
<div style="position:absolute;left:599px;top:396.2px;width:126px;height:17.6px;background:#008a00;"></div>
<div style="position:absolute;left:599px;top:396.2px;width:116px;height:17.6px;background:#00c581;"></div>
<div style="position:absolute;left:599px;top:396.2px;width:67.5px;height:17.6px;background:#ffe100;"></div>
<div style="position:absolute;left:604px;top:395.0px;height:20px;line-height:20px;font-family:'Liberation Sans', sans-serif;font-size:12px;color:#111;font-weight:400;white-space:pre;">BD_FD</div>
<div style="position:absolute;right:584px;top:395.0px;height:20px;line-height:20px;font-family:'Liberation Sans', sans-serif;font-size:12px;color:#111;font-weight:400;white-space:pre;text-align:right;">9.82%</div>
<div style="position:absolute;left:582px;top:420px;width:14px;height:14px;background:#fff;border:1px solid #333;"></div>
<svg style="position:absolute;left:582px;top:420px" width="14" height="14" viewBox="0 0 14 14"><path d="M2.5 7.2L5.5 10.2L11.5 3.2" stroke="#222" stroke-width="1.3" fill="none"/></svg>
<div style="position:absolute;left:599px;top:418.2px;width:126px;height:17.6px;background:#008a00;"></div>
<div style="position:absolute;left:599px;top:418.2px;width:113px;height:17.6px;background:#00c581;"></div>
<div style="position:absolute;left:599px;top:418.2px;width:81.70000000000005px;height:17.6px;background:#ffe100;"></div>
<div style="position:absolute;left:604px;top:417.0px;height:20px;line-height:20px;font-family:'Liberation Sans', sans-serif;font-size:12px;color:#111;font-weight:400;white-space:pre;">BD_SD</div>
<div style="position:absolute;right:584px;top:417.0px;height:20px;line-height:20px;font-family:'Liberation Sans', sans-serif;font-size:12px;color:#111;font-weight:400;white-space:pre;text-align:right;">0.14%</div>
<div style="position:absolute;left:582px;top:442px;width:14px;height:14px;background:#fff;border:1px solid #333;"></div>
<svg style="position:absolute;left:582px;top:442px" width="14" height="14" viewBox="0 0 14 14"><path d="M2.5 7.2L5.5 10.2L11.5 3.2" stroke="#222" stroke-width="1.3" fill="none"/></svg>
<div style="position:absolute;left:599px;top:440.2px;width:126px;height:17.6px;background:#008a00;"></div>
<div style="position:absolute;left:599px;top:440.2px;width:106.79999999999995px;height:17.6px;background:#00c581;"></div>
<div style="position:absolute;left:599px;top:440.2px;width:70px;height:17.6px;background:#ffe100;"></div>
<div style="position:absolute;left:604px;top:439.0px;height:20px;line-height:20px;font-family:'Liberation Sans', sans-serif;font-size:12px;color:#111;font-weight:400;white-space:pre;">BD_FD_SD</div>
<div style="position:absolute;right:584px;top:439.0px;height:20px;line-height:20px;font-family:'Liberation Sans', sans-serif;font-size:12px;color:#111;font-weight:400;white-space:pre;text-align:right;">0.37%</div>
<div style="position:absolute;left:582px;top:464px;width:14px;height:14px;background:#fff;border:1px solid #333;"></div>
<svg style="position:absolute;left:582px;top:464px" width="14" height="14" viewBox="0 0 14 14"><path d="M2.5 7.2L5.5 10.2L11.5 3.2" stroke="#222" stroke-width="1.3" fill="none"/></svg>
<div style="position:absolute;left:599px;top:462.2px;width:126px;height:17.6px;background:#008a00;"></div>
<div style="position:absolute;left:599px;top:462.2px;width:106.79999999999995px;height:17.6px;background:#00c581;"></div>
<div style="position:absolute;left:599px;top:462.2px;width:48.5px;height:17.6px;background:#ffe100;"></div>
<div style="position:absolute;left:604px;top:461.0px;height:20px;line-height:20px;font-family:'Liberation Sans', sans-serif;font-size:12px;color:#111;font-weight:400;white-space:pre;">no draw</div>
<div style="position:absolute;right:584px;top:461.0px;height:20px;line-height:20px;font-family:'Liberation Sans', sans-serif;font-size:12px;color:#111;font-weight:400;white-space:pre;text-align:right;">22.43%</div>
<div style="position:absolute;left:746px;top:109.0px;height:20px;line-height:20px;font-family:'Liberation Sans', sans-serif;font-size:12px;color:#000;font-weight:400;white-space:pre;">Stacks:</div>
<div style="position:absolute;left:746px;top:142.0px;height:20px;line-height:20px;font-family:'Liberation Sans', sans-serif;font-size:12px;color:#1a26b4;font-weight:400;white-space:pre;text-decoration:underline;">Player1</div>
<div style="position:absolute;right:440.5px;top:142.0px;height:20px;line-height:20px;font-family:'Liberation Sans', sans-serif;font-size:12px;color:#000;font-weight:400;white-space:pre;text-align:right;">92.00</div>
<div style="position:absolute;left:746px;top:175.0px;height:20px;line-height:20px;font-family:'Liberation Sans', sans-serif;font-size:12px;color:#1a26b4;font-weight:400;white-space:pre;text-decoration:underline;">Player2</div>
<div style="position:absolute;right:440.5px;top:175.0px;height:20px;line-height:20px;font-family:'Liberation Sans', sans-serif;font-size:12px;color:#000;font-weight:400;white-space:pre;text-align:right;">92.00</div>
<div style="position:absolute;left:747px;top:207.5px;width:120.5px;height:20.80000000000001px;background:#e5e5e5;border:1px solid #acacac;"></div>
<svg style="position:absolute;left:851.5px;top:215.4px" width="8" height="5" viewBox="0 0 8 5"><path d="M0 0H8L4 4.5Z" fill="#000"/></svg>
<div style="position:absolute;left:751.5px;top:207.9px;height:20px;line-height:20px;font-family:'Liberation Sans', sans-serif;font-size:12px;color:#000;font-weight:400;white-space:pre;">Nash EVs</div>
<div style="position:absolute;left:746px;top:241.0px;height:20px;line-height:20px;font-family:'Liberation Sans', sans-serif;font-size:12px;color:#1a26b4;font-weight:400;white-space:pre;text-decoration:underline;">Player1</div>
<div style="position:absolute;right:440.5px;top:241.0px;height:20px;line-height:20px;font-family:'Liberation Sans', sans-serif;font-size:12px;color:#000;font-weight:400;white-space:pre;text-align:right;">10.332</div>
<div style="position:absolute;left:746px;top:274.0px;height:20px;line-height:20px;font-family:'Liberation Sans', sans-serif;font-size:12px;color:#1a26b4;font-weight:400;white-space:pre;text-decoration:underline;">Player2</div>
<div style="position:absolute;right:440.5px;top:274.0px;height:20px;line-height:20px;font-family:'Liberation Sans', sans-serif;font-size:12px;color:#000;font-weight:400;white-space:pre;text-align:right;">7.168</div>
<div style="position:absolute;left:747px;top:306.4px;width:120.5px;height:20.900000000000034px;background:#e5e5e5;border:1px solid #acacac;"></div>
<svg style="position:absolute;left:851.5px;top:314.35px" width="8" height="5" viewBox="0 0 8 5"><path d="M0 0H8L4 4.5Z" fill="#000"/></svg>
<div style="position:absolute;left:751.5px;top:306.85px;height:20px;line-height:20px;font-family:'Liberation Sans', sans-serif;font-size:12px;color:#000;font-weight:400;white-space:pre;">Absolute weight</div>
<div style="position:absolute;left:747px;top:339.6px;width:120.5px;height:20.799999999999955px;background:#e5e5e5;border:1px solid #acacac;"></div>
<svg style="position:absolute;left:851.5px;top:347.5px" width="8" height="5" viewBox="0 0 8 5"><path d="M0 0H8L4 4.5Z" fill="#000"/></svg>
<div style="position:absolute;left:751.5px;top:340.0px;height:20px;line-height:20px;font-family:'Liberation Sans', sans-serif;font-size:12px;color:#000;font-weight:400;white-space:pre;">Strategy Show</div>
<div style="position:absolute;left:753px;top:377.5px;width:17px;height:17px;background:#ffe100;border-right:1px solid #222;border-bottom:1px solid #222;"></div>
<div style="position:absolute;left:780px;top:376.0px;height:20px;line-height:20px;font-family:'Liberation Sans', sans-serif;font-size:12px;color:#000;font-weight:400;white-space:pre;">Check</div>
<div style="position:absolute;left:753px;top:410.5px;width:17px;height:17px;background:#00c581;border-right:1px solid #222;border-bottom:1px solid #222;"></div>
<div style="position:absolute;left:780px;top:409.0px;height:20px;line-height:20px;font-family:'Liberation Sans', sans-serif;font-size:12px;color:#000;font-weight:400;white-space:pre;">Bet 6.20</div>
<div style="position:absolute;left:753px;top:443.5px;width:17px;height:17px;background:#008a00;border-right:1px solid #222;border-bottom:1px solid #222;"></div>
<div style="position:absolute;left:780px;top:442.0px;height:20px;line-height:20px;font-family:'Liberation Sans', sans-serif;font-size:12px;color:#000;font-weight:400;white-space:pre;">Bet 11.50</div>
<div style="position:absolute;left:604px;top:604.8px;width:14px;height:14px;border-radius:50%;border:1.5px solid #333;background:#fff;"></div>
<div style="position:absolute;left:607.5px;top:608.3px;width:7px;height:7px;border-radius:50%;background:#333;"></div>
<div style="position:absolute;left:624.6px;top:601.8px;height:20px;line-height:20px;font-family:'Liberation Sans', sans-serif;font-size:12px;color:#000;font-weight:400;white-space:pre;">Eq vs Range</div>
<div style="position:absolute;left:703px;top:604.8px;width:14px;height:14px;border-radius:50%;border:1px solid #c4c4c4;background:#fff;"></div>
<div style="position:absolute;left:723.6px;top:601.8px;height:20px;line-height:20px;font-family:'Liberation Sans', sans-serif;font-size:12px;color:#838383;font-weight:400;white-space:pre;">Eq vs Call</div>
<div style="position:absolute;left:786px;top:604.8px;width:14px;height:14px;border-radius:50%;border:1px solid #c4c4c4;background:#fff;"></div>
<div style="position:absolute;left:805.8px;top:601.8px;height:20px;line-height:20px;font-family:'Liberation Sans', sans-serif;font-size:12px;color:#838383;font-weight:400;white-space:pre;">Fold Equity</div>
<div style="position:absolute;left:890px;top:74.7px;width:396px;height:291px;background:#fff;border:1px solid #828282;"></div>
<div style="position:absolute;left:890.5px;top:75.7px;width:374.70000000000005px;height:25.599999999999994px;background:#fff;"></div>
<div style="position:absolute;left:1023.2px;top:75.7px;width:1px;height:25.599999999999994px;background:#e5e5e5;"></div>
<div style="position:absolute;left:1084.4px;top:75.7px;width:1px;height:25.599999999999994px;background:#e5e5e5;"></div>
<div style="position:absolute;left:1144.6px;top:75.7px;width:1px;height:25.599999999999994px;background:#e5e5e5;"></div>
<div style="position:absolute;left:1205px;top:75.7px;width:1px;height:25.599999999999994px;background:#e5e5e5;"></div>
<div style="position:absolute;left:1265.2px;top:75.7px;width:1px;height:25.599999999999994px;background:#e5e5e5;"></div>
<div style="position:absolute;left:756.85px;width:400px;top:79.5px;height:20px;line-height:20px;font-family:'Liberation Sans', sans-serif;font-size:12px;color:#000;font-weight:400;white-space:pre;text-align:center;">Card</div>
<div style="position:absolute;left:853.8000000000002px;width:400px;top:79.5px;height:20px;line-height:20px;font-family:'Liberation Sans', sans-serif;font-size:12px;color:#000;font-weight:400;white-space:pre;text-align:center;">Abs.%</div>
<div style="position:absolute;left:914.5px;width:400px;top:79.5px;height:20px;line-height:20px;font-family:'Liberation Sans', sans-serif;font-size:12px;color:#000;font-weight:400;white-space:pre;text-align:center;">Played%</div>
<div style="position:absolute;left:974.8px;width:400px;top:79.5px;height:20px;line-height:20px;font-family:'Liberation Sans', sans-serif;font-size:12px;color:#000;font-weight:400;white-space:pre;text-align:center;">Equity</div>
<div style="position:absolute;left:1035.1px;width:400px;top:79.5px;height:20px;line-height:20px;font-family:'Liberation Sans', sans-serif;font-size:12px;color:#000;font-weight:400;white-space:pre;text-align:center;">EV</div>
<svg style="position:absolute;left:1109px;top:76px" width="10" height="5" viewBox="0 0 10 5"><path d="M0.5 0.5L5 4.5L9.5 0.5" stroke="#9a9a9a" fill="none" stroke-width="1"/></svg>
<div style="position:absolute;left:890.5px;top:101.3px;width:374.70000000000005px;height:22px;background:#efeff1;"></div>
<div style="position:absolute;left:890.5px;top:122.6px;width:374.70000000000005px;height:1px;background:#e8e8e8;"></div>
<div style="position:absolute;left:1023.2px;top:101.3px;width:1px;height:22px;background:#e8e8e8;"></div>
<div style="position:absolute;left:1084.4px;top:101.3px;width:1px;height:22px;background:#e8e8e8;"></div>
<div style="position:absolute;left:1144.6px;top:101.3px;width:1px;height:22px;background:#e8e8e8;"></div>
<div style="position:absolute;left:1205px;top:101.3px;width:1px;height:22px;background:#e8e8e8;"></div>
<div style="position:absolute;left:1265.2px;top:101.3px;width:1px;height:22px;background:#e8e8e8;"></div>
<div style="position:absolute;left:902px;top:103.8px;height:20px;line-height:20px;font-family:'Liberation Mono', monospace;font-size:13px;color:#000;font-weight:400;white-space:pre;letter-spacing:-0.6px;"><span style="color:#0a640a"><span style="font-size:16px;font-family:'Liberation Sans', sans-serif;">&#9827;</span>A</span> <span style="color:#0a640a"><span style="font-size:16px;font-family:'Liberation Sans', sans-serif;">&#9827;</span>5</span></div>
<div style="position:absolute;right:228.0999999999999px;top:102.8px;height:20px;line-height:20px;font-family:'Liberation Sans', sans-serif;font-size:12px;color:#000;font-weight:400;white-space:pre;text-align:right;">75.00</div>
<div style="position:absolute;right:167.9000000000001px;top:102.8px;height:20px;line-height:20px;font-family:'Liberation Sans', sans-serif;font-size:12px;color:#000;font-weight:400;white-space:pre;text-align:right;">98.53</div>
<div style="position:absolute;right:107.5px;top:102.8px;height:20px;line-height:20px;font-family:'Liberation Sans', sans-serif;font-size:12px;color:#000;font-weight:400;white-space:pre;text-align:right;">23.14</div>
<div style="position:absolute;right:47.299999999999955px;top:102.8px;height:20px;line-height:20px;font-family:'Liberation Sans', sans-serif;font-size:12px;color:#000;font-weight:400;white-space:pre;text-align:right;">+1.599</div>
<div style="position:absolute;left:890.5px;top:144.6px;width:374.70000000000005px;height:1px;background:#e8e8e8;"></div>
<div style="position:absolute;left:1023.2px;top:123.3px;width:1px;height:22px;background:#e8e8e8;"></div>
<div style="position:absolute;left:1084.4px;top:123.3px;width:1px;height:22px;background:#e8e8e8;"></div>
<div style="position:absolute;left:1144.6px;top:123.3px;width:1px;height:22px;background:#e8e8e8;"></div>
<div style="position:absolute;left:1205px;top:123.3px;width:1px;height:22px;background:#e8e8e8;"></div>
<div style="position:absolute;left:1265.2px;top:123.3px;width:1px;height:22px;background:#e8e8e8;"></div>
<div style="position:absolute;left:902px;top:125.80000000000001px;height:20px;line-height:20px;font-family:'Liberation Mono', monospace;font-size:13px;color:#000;font-weight:400;white-space:pre;letter-spacing:-0.6px;"><span style="color:#0a640a"><span style="font-size:16px;font-family:'Liberation Sans', sans-serif;">&#9827;</span>A</span> <span style="color:#0a640a"><span style="font-size:16px;font-family:'Liberation Sans', sans-serif;">&#9827;</span>4</span></div>
<div style="position:absolute;right:228.0999999999999px;top:124.80000000000001px;height:20px;line-height:20px;font-family:'Liberation Sans', sans-serif;font-size:12px;color:#000;font-weight:400;white-space:pre;text-align:right;">75.00</div>
<div style="position:absolute;right:167.9000000000001px;top:124.80000000000001px;height:20px;line-height:20px;font-family:'Liberation Sans', sans-serif;font-size:12px;color:#000;font-weight:400;white-space:pre;text-align:right;">96.16</div>
<div style="position:absolute;right:107.5px;top:124.80000000000001px;height:20px;line-height:20px;font-family:'Liberation Sans', sans-serif;font-size:12px;color:#000;font-weight:400;white-space:pre;text-align:right;">22.58</div>
<div style="position:absolute;right:47.299999999999955px;top:124.80000000000001px;height:20px;line-height:20px;font-family:'Liberation Sans', sans-serif;font-size:12px;color:#000;font-weight:400;white-space:pre;text-align:right;">+1.529</div>
<div style="position:absolute;left:890.5px;top:166.60000000000002px;width:374.70000000000005px;height:1px;background:#e8e8e8;"></div>
<div style="position:absolute;left:1023.2px;top:145.3px;width:1px;height:22px;background:#e8e8e8;"></div>
<div style="position:absolute;left:1084.4px;top:145.3px;width:1px;height:22px;background:#e8e8e8;"></div>
<div style="position:absolute;left:1144.6px;top:145.3px;width:1px;height:22px;background:#e8e8e8;"></div>
<div style="position:absolute;left:1205px;top:145.3px;width:1px;height:22px;background:#e8e8e8;"></div>
<div style="position:absolute;left:1265.2px;top:145.3px;width:1px;height:22px;background:#e8e8e8;"></div>
<div style="position:absolute;left:902px;top:147.8px;height:20px;line-height:20px;font-family:'Liberation Mono', monospace;font-size:13px;color:#000;font-weight:400;white-space:pre;letter-spacing:-0.6px;"><span style="color:#0a640a"><span style="font-size:16px;font-family:'Liberation Sans', sans-serif;">&#9827;</span>A</span> <span style="color:#0a640a"><span style="font-size:16px;font-family:'Liberation Sans', sans-serif;">&#9827;</span>3</span></div>
<div style="position:absolute;right:228.0999999999999px;top:146.8px;height:20px;line-height:20px;font-family:'Liberation Sans', sans-serif;font-size:12px;color:#000;font-weight:400;white-space:pre;text-align:right;">50.00</div>
<div style="position:absolute;right:167.9000000000001px;top:146.8px;height:20px;line-height:20px;font-family:'Liberation Sans', sans-serif;font-size:12px;color:#000;font-weight:400;white-space:pre;text-align:right;">94.31</div>
<div style="position:absolute;right:107.5px;top:146.8px;height:20px;line-height:20px;font-family:'Liberation Sans', sans-serif;font-size:12px;color:#000;font-weight:400;white-space:pre;text-align:right;">21.17</div>
<div style="position:absolute;right:47.299999999999955px;top:146.8px;height:20px;line-height:20px;font-family:'Liberation Sans', sans-serif;font-size:12px;color:#000;font-weight:400;white-space:pre;text-align:right;">+1.367</div>
<div style="position:absolute;left:890.5px;top:188.60000000000002px;width:374.70000000000005px;height:1px;background:#e8e8e8;"></div>
<div style="position:absolute;left:1023.2px;top:167.3px;width:1px;height:22px;background:#e8e8e8;"></div>
<div style="position:absolute;left:1084.4px;top:167.3px;width:1px;height:22px;background:#e8e8e8;"></div>
<div style="position:absolute;left:1144.6px;top:167.3px;width:1px;height:22px;background:#e8e8e8;"></div>
<div style="position:absolute;left:1205px;top:167.3px;width:1px;height:22px;background:#e8e8e8;"></div>
<div style="position:absolute;left:1265.2px;top:167.3px;width:1px;height:22px;background:#e8e8e8;"></div>
<div style="position:absolute;left:902px;top:169.8px;height:20px;line-height:20px;font-family:'Liberation Mono', monospace;font-size:13px;color:#000;font-weight:400;white-space:pre;letter-spacing:-0.6px;"><span style="color:#0a640a"><span style="font-size:16px;font-family:'Liberation Sans', sans-serif;">&#9827;</span>A</span> <span style="color:#1428c8"><span style="font-size:16px;font-family:'Liberation Sans', sans-serif;">&#9830;</span>Q</span></div>
<div style="position:absolute;right:228.0999999999999px;top:168.8px;height:20px;line-height:20px;font-family:'Liberation Sans', sans-serif;font-size:12px;color:#000;font-weight:400;white-space:pre;text-align:right;">50.00</div>
<div style="position:absolute;right:167.9000000000001px;top:168.8px;height:20px;line-height:20px;font-family:'Liberation Sans', sans-serif;font-size:12px;color:#000;font-weight:400;white-space:pre;text-align:right;">90.61</div>
<div style="position:absolute;right:107.5px;top:168.8px;height:20px;line-height:20px;font-family:'Liberation Sans', sans-serif;font-size:12px;color:#000;font-weight:400;white-space:pre;text-align:right;">36.86</div>
<div style="position:absolute;right:47.299999999999955px;top:168.8px;height:20px;line-height:20px;font-family:'Liberation Sans', sans-serif;font-size:12px;color:#000;font-weight:400;white-space:pre;text-align:right;">+3.103</div>
<div style="position:absolute;left:890.5px;top:210.60000000000002px;width:374.70000000000005px;height:1px;background:#e8e8e8;"></div>
<div style="position:absolute;left:1023.2px;top:189.3px;width:1px;height:22px;background:#e8e8e8;"></div>
<div style="position:absolute;left:1084.4px;top:189.3px;width:1px;height:22px;background:#e8e8e8;"></div>
<div style="position:absolute;left:1144.6px;top:189.3px;width:1px;height:22px;background:#e8e8e8;"></div>
<div style="position:absolute;left:1205px;top:189.3px;width:1px;height:22px;background:#e8e8e8;"></div>
<div style="position:absolute;left:1265.2px;top:189.3px;width:1px;height:22px;background:#e8e8e8;"></div>
<div style="position:absolute;left:902px;top:191.8px;height:20px;line-height:20px;font-family:'Liberation Mono', monospace;font-size:13px;color:#000;font-weight:400;white-space:pre;letter-spacing:-0.6px;"><span style="color:#0a640a"><span style="font-size:16px;font-family:'Liberation Sans', sans-serif;">&#9827;</span>6</span> <span style="color:#0a640a"><span style="font-size:16px;font-family:'Liberation Sans', sans-serif;">&#9827;</span>5</span></div>
<div style="position:absolute;right:228.0999999999999px;top:190.8px;height:20px;line-height:20px;font-family:'Liberation Sans', sans-serif;font-size:12px;color:#000;font-weight:400;white-space:pre;text-align:right;">25.00</div>
<div style="position:absolute;right:167.9000000000001px;top:190.8px;height:20px;line-height:20px;font-family:'Liberation Sans', sans-serif;font-size:12px;color:#000;font-weight:400;white-space:pre;text-align:right;">90.43</div>
<div style="position:absolute;right:107.5px;top:190.8px;height:20px;line-height:20px;font-family:'Liberation Sans', sans-serif;font-size:12px;color:#000;font-weight:400;white-space:pre;text-align:right;">48.16</div>
<div style="position:absolute;right:47.299999999999955px;top:190.8px;height:20px;line-height:20px;font-family:'Liberation Sans', sans-serif;font-size:12px;color:#000;font-weight:400;white-space:pre;text-align:right;">+6.726</div>
<div style="position:absolute;left:890.5px;top:232.60000000000002px;width:374.70000000000005px;height:1px;background:#e8e8e8;"></div>
<div style="position:absolute;left:1023.2px;top:211.3px;width:1px;height:22px;background:#e8e8e8;"></div>
<div style="position:absolute;left:1084.4px;top:211.3px;width:1px;height:22px;background:#e8e8e8;"></div>
<div style="position:absolute;left:1144.6px;top:211.3px;width:1px;height:22px;background:#e8e8e8;"></div>
<div style="position:absolute;left:1205px;top:211.3px;width:1px;height:22px;background:#e8e8e8;"></div>
<div style="position:absolute;left:1265.2px;top:211.3px;width:1px;height:22px;background:#e8e8e8;"></div>
<div style="position:absolute;left:902px;top:213.8px;height:20px;line-height:20px;font-family:'Liberation Mono', monospace;font-size:13px;color:#000;font-weight:400;white-space:pre;letter-spacing:-0.6px;"><span style="color:#0a640a"><span style="font-size:16px;font-family:'Liberation Sans', sans-serif;">&#9827;</span>7</span> <span style="color:#e0301a"><span style="font-size:16px;font-family:'Liberation Sans', sans-serif;">&#9829;</span>7</span></div>
<div style="position:absolute;right:228.0999999999999px;top:212.8px;height:20px;line-height:20px;font-family:'Liberation Sans', sans-serif;font-size:12px;color:#000;font-weight:400;white-space:pre;text-align:right;">50.00</div>
<div style="position:absolute;right:167.9000000000001px;top:212.8px;height:20px;line-height:20px;font-family:'Liberation Sans', sans-serif;font-size:12px;color:#000;font-weight:400;white-space:pre;text-align:right;">85.84</div>
<div style="position:absolute;right:107.5px;top:212.8px;height:20px;line-height:20px;font-family:'Liberation Sans', sans-serif;font-size:12px;color:#000;font-weight:400;white-space:pre;text-align:right;">55.23</div>
<div style="position:absolute;right:47.299999999999955px;top:212.8px;height:20px;line-height:20px;font-family:'Liberation Sans', sans-serif;font-size:12px;color:#000;font-weight:400;white-space:pre;text-align:right;">+9.553</div>
<div style="position:absolute;left:890.5px;top:254.60000000000002px;width:374.70000000000005px;height:1px;background:#e8e8e8;"></div>
<div style="position:absolute;left:1023.2px;top:233.3px;width:1px;height:22px;background:#e8e8e8;"></div>
<div style="position:absolute;left:1084.4px;top:233.3px;width:1px;height:22px;background:#e8e8e8;"></div>
<div style="position:absolute;left:1144.6px;top:233.3px;width:1px;height:22px;background:#e8e8e8;"></div>
<div style="position:absolute;left:1205px;top:233.3px;width:1px;height:22px;background:#e8e8e8;"></div>
<div style="position:absolute;left:1265.2px;top:233.3px;width:1px;height:22px;background:#e8e8e8;"></div>
<div style="position:absolute;left:902px;top:235.8px;height:20px;line-height:20px;font-family:'Liberation Mono', monospace;font-size:13px;color:#000;font-weight:400;white-space:pre;letter-spacing:-0.6px;"><span style="color:#0a640a"><span style="font-size:16px;font-family:'Liberation Sans', sans-serif;">&#9827;</span>5</span> <span style="color:#0a640a"><span style="font-size:16px;font-family:'Liberation Sans', sans-serif;">&#9827;</span>4</span></div>
<div style="position:absolute;right:228.0999999999999px;top:234.8px;height:20px;line-height:20px;font-family:'Liberation Sans', sans-serif;font-size:12px;color:#000;font-weight:400;white-space:pre;text-align:right;">25.00</div>
<div style="position:absolute;right:167.9000000000001px;top:234.8px;height:20px;line-height:20px;font-family:'Liberation Sans', sans-serif;font-size:12px;color:#000;font-weight:400;white-space:pre;text-align:right;">85.79</div>
<div style="position:absolute;right:107.5px;top:234.8px;height:20px;line-height:20px;font-family:'Liberation Sans', sans-serif;font-size:12px;color:#000;font-weight:400;white-space:pre;text-align:right;">22.93</div>
<div style="position:absolute;right:47.299999999999955px;top:234.8px;height:20px;line-height:20px;font-family:'Liberation Sans', sans-serif;font-size:12px;color:#000;font-weight:400;white-space:pre;text-align:right;">+3.727</div>
<div style="position:absolute;left:890.5px;top:276.6px;width:374.70000000000005px;height:1px;background:#e8e8e8;"></div>
<div style="position:absolute;left:1023.2px;top:255.3px;width:1px;height:22px;background:#e8e8e8;"></div>
<div style="position:absolute;left:1084.4px;top:255.3px;width:1px;height:22px;background:#e8e8e8;"></div>
<div style="position:absolute;left:1144.6px;top:255.3px;width:1px;height:22px;background:#e8e8e8;"></div>
<div style="position:absolute;left:1205px;top:255.3px;width:1px;height:22px;background:#e8e8e8;"></div>
<div style="position:absolute;left:1265.2px;top:255.3px;width:1px;height:22px;background:#e8e8e8;"></div>
<div style="position:absolute;left:902px;top:257.8px;height:20px;line-height:20px;font-family:'Liberation Mono', monospace;font-size:13px;color:#000;font-weight:400;white-space:pre;letter-spacing:-0.6px;"><span style="color:#0a640a"><span style="font-size:16px;font-family:'Liberation Sans', sans-serif;">&#9827;</span>7</span> <span style="color:#1428c8"><span style="font-size:16px;font-family:'Liberation Sans', sans-serif;">&#9830;</span>7</span></div>
<div style="position:absolute;right:228.0999999999999px;top:256.8px;height:20px;line-height:20px;font-family:'Liberation Sans', sans-serif;font-size:12px;color:#000;font-weight:400;white-space:pre;text-align:right;">50.00</div>
<div style="position:absolute;right:167.9000000000001px;top:256.8px;height:20px;line-height:20px;font-family:'Liberation Sans', sans-serif;font-size:12px;color:#000;font-weight:400;white-space:pre;text-align:right;">83.94</div>
<div style="position:absolute;right:107.5px;top:256.8px;height:20px;line-height:20px;font-family:'Liberation Sans', sans-serif;font-size:12px;color:#000;font-weight:400;white-space:pre;text-align:right;">55.51</div>
<div style="position:absolute;right:47.299999999999955px;top:256.8px;height:20px;line-height:20px;font-family:'Liberation Sans', sans-serif;font-size:12px;color:#000;font-weight:400;white-space:pre;text-align:right;">+9.634</div>
<div style="position:absolute;left:890.5px;top:298.6px;width:374.70000000000005px;height:1px;background:#e8e8e8;"></div>
<div style="position:absolute;left:1023.2px;top:277.3px;width:1px;height:22px;background:#e8e8e8;"></div>
<div style="position:absolute;left:1084.4px;top:277.3px;width:1px;height:22px;background:#e8e8e8;"></div>
<div style="position:absolute;left:1144.6px;top:277.3px;width:1px;height:22px;background:#e8e8e8;"></div>
<div style="position:absolute;left:1205px;top:277.3px;width:1px;height:22px;background:#e8e8e8;"></div>
<div style="position:absolute;left:1265.2px;top:277.3px;width:1px;height:22px;background:#e8e8e8;"></div>
<div style="position:absolute;left:902px;top:279.8px;height:20px;line-height:20px;font-family:'Liberation Mono', monospace;font-size:13px;color:#000;font-weight:400;white-space:pre;letter-spacing:-0.6px;"><span style="color:#0a640a"><span style="font-size:16px;font-family:'Liberation Sans', sans-serif;">&#9827;</span>A</span> <span style="color:#0a640a"><span style="font-size:16px;font-family:'Liberation Sans', sans-serif;">&#9827;</span>6</span></div>
<div style="position:absolute;right:228.0999999999999px;top:278.8px;height:20px;line-height:20px;font-family:'Liberation Sans', sans-serif;font-size:12px;color:#000;font-weight:400;white-space:pre;text-align:right;">50.00</div>
<div style="position:absolute;right:167.9000000000001px;top:278.8px;height:20px;line-height:20px;font-family:'Liberation Sans', sans-serif;font-size:12px;color:#000;font-weight:400;white-space:pre;text-align:right;">83.45</div>
<div style="position:absolute;right:107.5px;top:278.8px;height:20px;line-height:20px;font-family:'Liberation Sans', sans-serif;font-size:12px;color:#000;font-weight:400;white-space:pre;text-align:right;">51.10</div>
<div style="position:absolute;right:47.299999999999955px;top:278.8px;height:20px;line-height:20px;font-family:'Liberation Sans', sans-serif;font-size:12px;color:#000;font-weight:400;white-space:pre;text-align:right;">+6.194</div>
<div style="position:absolute;left:890.5px;top:320.6px;width:374.70000000000005px;height:1px;background:#e8e8e8;"></div>
<div style="position:absolute;left:1023.2px;top:299.3px;width:1px;height:22px;background:#e8e8e8;"></div>
<div style="position:absolute;left:1084.4px;top:299.3px;width:1px;height:22px;background:#e8e8e8;"></div>
<div style="position:absolute;left:1144.6px;top:299.3px;width:1px;height:22px;background:#e8e8e8;"></div>
<div style="position:absolute;left:1205px;top:299.3px;width:1px;height:22px;background:#e8e8e8;"></div>
<div style="position:absolute;left:1265.2px;top:299.3px;width:1px;height:22px;background:#e8e8e8;"></div>
<div style="position:absolute;left:902px;top:301.8px;height:20px;line-height:20px;font-family:'Liberation Mono', monospace;font-size:13px;color:#000;font-weight:400;white-space:pre;letter-spacing:-0.6px;"><span style="color:#e0301a"><span style="font-size:16px;font-family:'Liberation Sans', sans-serif;">&#9829;</span>A</span> <span style="color:#e0301a"><span style="font-size:16px;font-family:'Liberation Sans', sans-serif;">&#9829;</span>6</span></div>
<div style="position:absolute;right:228.0999999999999px;top:300.8px;height:20px;line-height:20px;font-family:'Liberation Sans', sans-serif;font-size:12px;color:#000;font-weight:400;white-space:pre;text-align:right;">50.00</div>
<div style="position:absolute;right:167.9000000000001px;top:300.8px;height:20px;line-height:20px;font-family:'Liberation Sans', sans-serif;font-size:12px;color:#000;font-weight:400;white-space:pre;text-align:right;">82.61</div>
<div style="position:absolute;right:107.5px;top:300.8px;height:20px;line-height:20px;font-family:'Liberation Sans', sans-serif;font-size:12px;color:#000;font-weight:400;white-space:pre;text-align:right;">53.89</div>
<div style="position:absolute;right:47.299999999999955px;top:300.8px;height:20px;line-height:20px;font-family:'Liberation Sans', sans-serif;font-size:12px;color:#000;font-weight:400;white-space:pre;text-align:right;">+7.861</div>
<div style="position:absolute;left:890.5px;top:342.6px;width:374.70000000000005px;height:1px;background:#e8e8e8;"></div>
<div style="position:absolute;left:1023.2px;top:321.3px;width:1px;height:22px;background:#e8e8e8;"></div>
<div style="position:absolute;left:1084.4px;top:321.3px;width:1px;height:22px;background:#e8e8e8;"></div>
<div style="position:absolute;left:1144.6px;top:321.3px;width:1px;height:22px;background:#e8e8e8;"></div>
<div style="position:absolute;left:1205px;top:321.3px;width:1px;height:22px;background:#e8e8e8;"></div>
<div style="position:absolute;left:1265.2px;top:321.3px;width:1px;height:22px;background:#e8e8e8;"></div>
<div style="position:absolute;left:902px;top:323.8px;height:20px;line-height:20px;font-family:'Liberation Mono', monospace;font-size:13px;color:#000;font-weight:400;white-space:pre;letter-spacing:-0.6px;"><span style="color:#1428c8"><span style="font-size:16px;font-family:'Liberation Sans', sans-serif;">&#9830;</span>7</span> <span style="color:#e0301a"><span style="font-size:16px;font-family:'Liberation Sans', sans-serif;">&#9829;</span>7</span></div>
<div style="position:absolute;right:228.0999999999999px;top:322.8px;height:20px;line-height:20px;font-family:'Liberation Sans', sans-serif;font-size:12px;color:#000;font-weight:400;white-space:pre;text-align:right;">50.00</div>
<div style="position:absolute;right:167.9000000000001px;top:322.8px;height:20px;line-height:20px;font-family:'Liberation Sans', sans-serif;font-size:12px;color:#000;font-weight:400;white-space:pre;text-align:right;">82.07</div>
<div style="position:absolute;right:107.5px;top:322.8px;height:20px;line-height:20px;font-family:'Liberation Sans', sans-serif;font-size:12px;color:#000;font-weight:400;white-space:pre;text-align:right;">55.31</div>
<div style="position:absolute;right:47.299999999999955px;top:322.8px;height:20px;line-height:20px;font-family:'Liberation Sans', sans-serif;font-size:12px;color:#000;font-weight:400;white-space:pre;text-align:right;">+9.590</div>
<div style="position:absolute;left:1023.2px;top:343.3px;width:1px;height:20.5px;background:#e8e8e8;"></div>
<div style="position:absolute;left:1084.4px;top:343.3px;width:1px;height:20.5px;background:#e8e8e8;"></div>
<div style="position:absolute;left:1144.6px;top:343.3px;width:1px;height:20.5px;background:#e8e8e8;"></div>
<div style="position:absolute;left:1205px;top:343.3px;width:1px;height:20.5px;background:#e8e8e8;"></div>
<div style="position:absolute;left:1265.2px;top:343.3px;width:1px;height:20.5px;background:#e8e8e8;"></div>
<div style="position:absolute;left:902px;top:345.8px;height:20px;line-height:20px;font-family:'Liberation Mono', monospace;font-size:13px;color:#000;font-weight:400;white-space:pre;letter-spacing:-0.6px;"><span style="color:#e0301a"><span style="font-size:16px;font-family:'Liberation Sans', sans-serif;">&#9829;</span>6</span> <span style="color:#e0301a"><span style="font-size:16px;font-family:'Liberation Sans', sans-serif;">&#9829;</span>5</span></div>
<div style="position:absolute;right:228.0999999999999px;top:344.8px;height:20px;line-height:20px;font-family:'Liberation Sans', sans-serif;font-size:12px;color:#000;font-weight:400;white-space:pre;text-align:right;">25.00</div>
<div style="position:absolute;right:167.9000000000001px;top:344.8px;height:20px;line-height:20px;font-family:'Liberation Sans', sans-serif;font-size:12px;color:#000;font-weight:400;white-space:pre;text-align:right;">81.72</div>
<div style="position:absolute;right:107.5px;top:344.8px;height:20px;line-height:20px;font-family:'Liberation Sans', sans-serif;font-size:12px;color:#000;font-weight:400;white-space:pre;text-align:right;">50.70</div>
<div style="position:absolute;right:47.299999999999955px;top:344.8px;height:20px;line-height:20px;font-family:'Liberation Sans', sans-serif;font-size:12px;color:#000;font-weight:400;white-space:pre;text-align:right;">+7.918</div>
<div style="position:absolute;left:1265.2px;top:75.7px;width:20px;height:289px;background:#f0f0f0;"></div>
<div style="position:absolute;left:1267.7px;top:95.2px;width:15.6px;height:19.1px;background:#cdcdcd;"></div>
<svg style="position:absolute;left:1271px;top:82px" width="9" height="6" viewBox="0 0 9 6"><path d="M0.7 5.3L4.5 1.2L8.3 5.3" stroke="#333" fill="none" stroke-width="1.5"/></svg>
<svg style="position:absolute;left:1271px;top:351px" width="9" height="6" viewBox="0 0 9 6"><path d="M0.7 0.7L4.5 4.8L8.3 0.7" stroke="#333" fill="none" stroke-width="1.5"/></svg>
<div style="position:absolute;left:890px;top:383.5px;width:396px;height:250px;background:#fff;border:1px solid #828282;"></div>
<div style="position:absolute;left:890.5px;top:384.5px;width:374.70000000000005px;height:25.0px;background:#fff;"></div>
<div style="position:absolute;left:1023.2px;top:384.5px;width:1px;height:25.0px;background:#e5e5e5;"></div>
<div style="position:absolute;left:1084.4px;top:384.5px;width:1px;height:25.0px;background:#e5e5e5;"></div>
<div style="position:absolute;left:1144.6px;top:384.5px;width:1px;height:25.0px;background:#e5e5e5;"></div>
<div style="position:absolute;left:1205px;top:384.5px;width:1px;height:25.0px;background:#e5e5e5;"></div>
<div style="position:absolute;left:1265.2px;top:384.5px;width:1px;height:25.0px;background:#e5e5e5;"></div>
<div style="position:absolute;left:756.85px;width:400px;top:388.0px;height:20px;line-height:20px;font-family:'Liberation Sans', sans-serif;font-size:12px;color:#000;font-weight:400;white-space:pre;text-align:center;">Action</div>
<div style="position:absolute;left:853.8000000000002px;width:400px;top:388.0px;height:20px;line-height:20px;font-family:'Liberation Sans', sans-serif;font-size:12px;color:#000;font-weight:400;white-space:pre;text-align:center;">Abs.%</div>
<div style="position:absolute;left:914.5px;width:400px;top:388.0px;height:20px;line-height:20px;font-family:'Liberation Sans', sans-serif;font-size:12px;color:#000;font-weight:400;white-space:pre;text-align:center;">Played%</div>
<div style="position:absolute;left:974.8px;width:400px;top:388.0px;height:20px;line-height:20px;font-family:'Liberation Sans', sans-serif;font-size:12px;color:#000;font-weight:400;white-space:pre;text-align:center;">Equity</div>
<div style="position:absolute;left:1035.1px;width:400px;top:388.0px;height:20px;line-height:20px;font-family:'Liberation Sans', sans-serif;font-size:12px;color:#000;font-weight:400;white-space:pre;text-align:center;">EV</div>
<div style="position:absolute;left:890.5px;top:430.5px;width:374.70000000000005px;height:1px;background:#e3e3e3;"></div>
<div style="position:absolute;left:1023.2px;top:409.5px;width:1px;height:22px;background:#e3e3e3;"></div>
<div style="position:absolute;left:1084.4px;top:409.5px;width:1px;height:22px;background:#e3e3e3;"></div>
<div style="position:absolute;left:1144.6px;top:409.5px;width:1px;height:22px;background:#e3e3e3;"></div>
<div style="position:absolute;left:1205px;top:409.5px;width:1px;height:22px;background:#e3e3e3;"></div>
<div style="position:absolute;left:1265.2px;top:409.5px;width:1px;height:22px;background:#e3e3e3;"></div>
<div style="position:absolute;left:895px;top:410.5px;height:20px;line-height:20px;font-family:'Liberation Sans', sans-serif;font-size:12px;color:#000;font-weight:400;white-space:pre;">Player2 Check</div>
<div style="position:absolute;right:228.0999999999999px;top:410.5px;height:20px;line-height:20px;font-family:'Liberation Sans', sans-serif;font-size:12px;color:#000;font-weight:400;white-space:pre;text-align:right;">75.00</div>
<div style="position:absolute;right:167.9000000000001px;top:410.5px;height:20px;line-height:20px;font-family:'Liberation Sans', sans-serif;font-size:12px;color:#000;font-weight:400;white-space:pre;text-align:right;">98.53</div>
<div style="position:absolute;right:107.5px;top:410.5px;height:20px;line-height:20px;font-family:'Liberation Sans', sans-serif;font-size:12px;color:#000;font-weight:400;white-space:pre;text-align:right;">23.14</div>
<div style="position:absolute;right:47.299999999999955px;top:410.5px;height:20px;line-height:20px;font-family:'Liberation Sans', sans-serif;font-size:12px;color:#1e8c1e;font-weight:400;white-space:pre;text-align:right;">+1.599</div>
<div style="position:absolute;left:890.5px;top:452.5px;width:374.70000000000005px;height:1px;background:#e3e3e3;"></div>
<div style="position:absolute;left:1023.2px;top:431.5px;width:1px;height:22px;background:#e3e3e3;"></div>
<div style="position:absolute;left:1084.4px;top:431.5px;width:1px;height:22px;background:#e3e3e3;"></div>
<div style="position:absolute;left:1144.6px;top:431.5px;width:1px;height:22px;background:#e3e3e3;"></div>
<div style="position:absolute;left:1205px;top:431.5px;width:1px;height:22px;background:#e3e3e3;"></div>
<div style="position:absolute;left:1265.2px;top:431.5px;width:1px;height:22px;background:#e3e3e3;"></div>
<div style="position:absolute;left:895px;top:432.5px;height:20px;line-height:20px;font-family:'Liberation Sans', sans-serif;font-size:12px;color:#000;font-weight:400;white-space:pre;">Player2 Bet 6.20</div>
<div style="position:absolute;right:228.0999999999999px;top:432.5px;height:20px;line-height:20px;font-family:'Liberation Sans', sans-serif;font-size:12px;color:#000;font-weight:400;white-space:pre;text-align:right;">75.00</div>
<div style="position:absolute;right:167.9000000000001px;top:432.5px;height:20px;line-height:20px;font-family:'Liberation Sans', sans-serif;font-size:12px;color:#000;font-weight:400;white-space:pre;text-align:right;">0.75</div>
<div style="position:absolute;right:107.5px;top:432.5px;height:20px;line-height:20px;font-family:'Liberation Sans', sans-serif;font-size:12px;color:#000;font-weight:400;white-space:pre;text-align:right;">19.57</div>
<div style="position:absolute;right:47.299999999999955px;top:432.5px;height:20px;line-height:20px;font-family:'Liberation Sans', sans-serif;font-size:12px;color:#1e8c1e;font-weight:400;white-space:pre;text-align:right;">+1.308</div>
<div style="position:absolute;left:890.5px;top:474.5px;width:374.70000000000005px;height:1px;background:#e3e3e3;"></div>
<div style="position:absolute;left:1023.2px;top:453.5px;width:1px;height:22px;background:#e3e3e3;"></div>
<div style="position:absolute;left:1084.4px;top:453.5px;width:1px;height:22px;background:#e3e3e3;"></div>
<div style="position:absolute;left:1144.6px;top:453.5px;width:1px;height:22px;background:#e3e3e3;"></div>
<div style="position:absolute;left:1205px;top:453.5px;width:1px;height:22px;background:#e3e3e3;"></div>
<div style="position:absolute;left:1265.2px;top:453.5px;width:1px;height:22px;background:#e3e3e3;"></div>
<div style="position:absolute;left:895px;top:454.5px;height:20px;line-height:20px;font-family:'Liberation Sans', sans-serif;font-size:12px;color:#000;font-weight:400;white-space:pre;">Player2 Bet 11.50</div>
<div style="position:absolute;right:228.0999999999999px;top:454.5px;height:20px;line-height:20px;font-family:'Liberation Sans', sans-serif;font-size:12px;color:#000;font-weight:400;white-space:pre;text-align:right;">75.00</div>
<div style="position:absolute;right:167.9000000000001px;top:454.5px;height:20px;line-height:20px;font-family:'Liberation Sans', sans-serif;font-size:12px;color:#000;font-weight:400;white-space:pre;text-align:right;">0.72</div>
<div style="position:absolute;right:107.5px;top:454.5px;height:20px;line-height:20px;font-family:'Liberation Sans', sans-serif;font-size:12px;color:#000;font-weight:400;white-space:pre;text-align:right;">16.59</div>
<div style="position:absolute;right:47.299999999999955px;top:454.5px;height:20px;line-height:20px;font-family:'Liberation Sans', sans-serif;font-size:12px;color:#1e8c1e;font-weight:400;white-space:pre;text-align:right;">+1.329</div>
<div style="position:absolute;left:1265.2px;top:384.5px;width:20px;height:248px;background:#f0f0f0;"></div>
<svg style="position:absolute;left:1271px;top:390px" width="9" height="6" viewBox="0 0 9 6"><path d="M0.7 5.3L4.5 1.2L8.3 5.3" stroke="#c8c8c8" fill="none" stroke-width="1.3"/></svg>
<svg style="position:absolute;left:1271px;top:620px" width="9" height="6" viewBox="0 0 9 6"><path d="M0.7 0.7L4.5 4.8L8.3 0.7" stroke="#c8c8c8" fill="none" stroke-width="1.3"/></svg>
<svg style="position:absolute;left:0;top:0" width="1308" height="1080"><rect x="22.1" y="580.1" width="538.5" height="44.299999999999955" fill="#ffe100"/><path d="M22.1,624.4 L22.14,623.09 L26.96,623.09 L26.96,618.81 L30.17,618.81 L30.17,623.63 L32.84,623.63 L32.84,609.72 L36.05,609.72 L36.05,600.08 L38.73,600.08 L38.73,601.69 L41.41,601.69 L41.41,600.08 L45.15,600.08 L45.15,607.57 L47.29,607.57 L47.29,613.46 L50.50,613.46 L50.50,606.50 L56.39,606.50 L56.39,602.22 L61.74,602.22 L61.74,594.73 L68.16,594.73 L68.16,595.27 L73.52,595.27 L73.52,592.05 L78.87,592.05 L78.87,585.63 L82.61,585.63 L82.61,615.39 L91.18,615.39 L91.18,599.01 L99.74,599.01 L99.74,603.29 L108.84,603.29 L108.84,610.25 L110.98,610.25 L110.98,604.36 L116.33,604.36 L116.33,598.48 L125.43,598.48 L125.43,587.77 L131.85,587.77 L131.85,607.57 L137.20,607.57 L137.20,604.36 L142.55,604.36 L142.55,587.99 L148.44,587.99 L148.44,604.90 L154.86,604.90 L154.86,599.01 L157.00,599.01 L157.00,590.98 L160.00,590.98 L160.00,590.45 L164.28,590.45 L164.28,586.17 L178.73,586.17 L178.73,596.87 L180.34,596.87 L180.34,586.17 L188.90,586.17 L188.90,607.04 L192.64,607.04 L192.64,619.88 L195.86,619.88 L195.86,614.00 L201.21,614.00 L201.21,604.36 L207.09,604.36 L207.09,591.52 L212.45,591.52 L212.45,606.50 L224.22,606.50 L224.22,588.31 L230.64,588.31 L230.64,582.42 L239.20,582.42 L239.20,592.05 L247.23,592.05 L247.23,613.46 L250.98,613.46 L250.98,606.50 L252.58,606.50 L252.58,612.93 L256.86,612.93 L256.86,602.76 L261.68,602.76 L261.68,597.41 L267.03,597.41 L267.03,611.32 L273.99,611.32 L273.99,597.41 L287.90,597.41 L287.90,616.14 L291.11,616.14 L291.11,580.28 L300.00,580.28 L300.00,610.79 L305.35,610.79 L305.35,595.27 L308.03,595.27 L308.03,604.36 L311.24,604.36 L311.24,597.41 L314.45,597.41 L314.45,610.25 L319.80,610.25 L319.80,595.80 L325.69,595.80 L325.69,594.73 L334.25,594.73 L334.25,618.81 L338.53,618.81 L338.53,616.14 L346.02,616.14 L346.02,617.21 L357.80,617.21 L357.80,614.00 L368.50,614.00 L368.50,592.05 L371.18,592.05 L371.18,613.46 L374.92,613.46 L374.92,592.05 L380.27,592.05 L380.27,609.18 L385.63,609.18 L385.63,586.17 L392.05,586.17 L392.05,589.91 L397.93,589.91 L397.93,607.04 L407.03,607.04 L407.03,595.80 L417.74,595.80 L417.74,591.52 L424.16,591.52 L424.16,608.11 L429.51,608.11 L429.51,580.28 L432.72,580.28 L432.72,589.38 L440.00,589.38 L443.91,602.22 L443.91,596.87 L452.48,596.87 L452.48,582.42 L458.90,582.42 L458.90,585.10 L467.46,585.10 L467.46,587.77 L477.09,587.77 L477.09,592.05 L481.38,592.05 L481.38,586.70 L508.13,586.70 L508.13,596.87 L516.70,596.87 L516.70,592.05 L525.26,592.05 L525.26,595.80 L541.31,595.80 L541.31,599.01 L543.45,599.01 L543.45,586.17 L556.30,586.17 L556.30,581.89 L560.58,581.89 L560.6,624.4 Z" fill="#00c581"/><path d="M22.1,624.4 L22.14,622.88 L32.84,622.88 L32.84,620.42 L36.59,620.42 L36.59,612.93 L45.15,612.93 L45.15,619.88 L47.29,619.88 L47.29,624.38 L51.04,624.38 L51.04,619.88 L56.39,619.88 L56.39,617.74 L73.52,617.74 L73.52,616.14 L78.87,616.14 L78.87,608.11 L82.61,608.11 L82.61,624.38 L91.18,624.38 L91.18,620.42 L101.34,620.42 L101.34,623.09 L108.84,623.09 L108.84,618.28 L117.40,618.28 L117.40,610.25 L120.07,610.25 L120.07,612.39 L125.43,612.39 L125.43,617.21 L132.38,617.21 L132.38,619.88 L140.95,619.88 L140.95,618.28 L148.44,618.28 L148.44,620.95 L154.86,620.95 L154.86,616.67 L160.00,616.67 L160.00,617.21 L169.10,617.21 L169.10,613.46 L177.66,613.46 L177.66,618.28 L188.90,618.28 L188.90,624.38 L195.32,624.38 L195.32,617.74 L207.09,617.74 L207.09,614.53 L212.45,614.53 L212.45,620.95 L224.22,620.95 L224.22,614.00 L233.85,614.00 L233.85,610.79 L239.20,610.79 L239.20,617.21 L247.23,617.21 L247.23,623.63 L256.33,623.63 L256.33,619.88 L287.90,619.88 L287.90,624.38 L291.11,624.38 L291.11,608.64 L300.00,608.64 L300.00,623.09 L305.35,623.09 L305.35,619.88 L308.03,619.88 L308.03,623.09 L311.24,623.09 L311.24,619.88 L314.45,619.88 L314.45,623.09 L319.27,623.09 L319.27,617.21 L325.69,617.21 L325.69,621.49 L334.25,621.49 L334.25,624.38 L374.92,624.38 L374.92,619.88 L380.27,619.88 L380.27,624.38 L385.63,624.38 L385.63,619.88 L389.37,619.88 L389.37,609.72 L397.93,609.72 L397.93,624.38 L407.03,624.38 L407.03,620.42 L417.74,620.42 L417.74,617.21 L424.16,617.21 L424.16,624.38 L429.51,624.38 L429.51,609.18 L432.72,609.18 L432.72,613.46 L440.00,613.46 L444.45,624.38 L444.45,622.02 L449.27,622.02 L449.27,614.53 L480.31,614.53 L480.31,612.39 L502.78,612.39 L502.78,610.79 L507.06,610.79 L507.06,614.53 L516.70,614.53 L516.70,617.21 L533.82,617.21 L533.82,624.38 L542.92,624.38 L542.92,618.81 L550.95,618.81 L550.95,623.09 L560.58,623.09 L560.6,624.4 Z" fill="#008a00"/></svg>
<div style="position:absolute;left:21px;top:665px;width:46px;height:68px;border:2px solid #14b414;background:#050505;"></div>
<div style="position:absolute;left:24px;top:668px;width:40px;height:62px;background:linear-gradient(to bottom,#0c1aa0,#000845);"></div>
<div style="position:absolute;left:24px;top:667px;font-family:'Liberation Serif', serif;font-size:12px;line-height:14px;color:#f0e8f0;">T</div>
<div style="position:absolute;left:25px;top:682.5px;font-family:'Liberation Sans', sans-serif;font-size:14px;line-height:16px;color:#fff;">&#9830;</div>
<div style="position:absolute;left:34px;top:683px;width:20px;text-align:center;font-family:'Liberation Serif', serif;font-size:28px;line-height:30px;color:#fff;">T</div>
<div style="position:absolute;left:76px;top:665px;width:46px;height:68px;border:2px solid #14b414;background:#050505;"></div>
<div style="position:absolute;left:79px;top:668px;width:40px;height:62px;background:linear-gradient(to bottom,#a81c02,#420600);"></div>
<div style="position:absolute;left:79px;top:667px;font-family:'Liberation Serif', serif;font-size:12px;line-height:14px;color:#f0e8f0;">8</div>
<div style="position:absolute;left:80px;top:682.5px;font-family:'Liberation Sans', sans-serif;font-size:14px;line-height:16px;color:#fff;">&#9829;</div>
<div style="position:absolute;left:87.5px;top:683px;width:20px;text-align:center;font-family:'Liberation Serif', serif;font-size:28px;line-height:30px;color:#fff;">8</div>
<div style="position:absolute;left:131px;top:665px;width:46px;height:68px;border:2px solid #14b414;background:#050505;"></div>
<div style="position:absolute;left:134px;top:668px;width:40px;height:62px;background:linear-gradient(to bottom,#7a7676,#363232);"></div>
<div style="position:absolute;left:134px;top:667px;font-family:'Liberation Serif', serif;font-size:12px;line-height:14px;color:#f0e8f0;">6</div>
<div style="position:absolute;left:135px;top:682.5px;font-family:'Liberation Sans', sans-serif;font-size:14px;line-height:16px;color:#fff;">&#9824;</div>
<div style="position:absolute;left:142.5px;top:683px;width:20px;text-align:center;font-family:'Liberation Serif', serif;font-size:28px;line-height:30px;color:#fff;">6</div>
<div style="position:absolute;left:186px;top:665px;width:46px;height:68px;border:2px solid #14b414;background:#f0f0f0;"></div>
<div style="position:absolute;left:242px;top:666px;width:45px;height:68px;border:1.5px solid #222;background:#f0f0f0;"></div>
<div style="position:absolute;left:296px;top:667.0px;height:20px;line-height:20px;font-family:'Liberation Sans', sans-serif;font-size:12px;color:#000;font-weight:400;white-space:pre;">Eff. Stack</div>
<div style="position:absolute;left:363px;top:666.5px;width:65.30000000000001px;height:21.799999999999955px;background:#f0f0f0;border:1px solid #cccccc;"></div>
<div style="position:absolute;right:906.7px;top:668.4px;height:20px;line-height:20px;font-family:'Liberation Sans', sans-serif;font-size:12px;color:#6d6d6d;font-weight:400;white-space:pre;text-align:right;">92,00</div>
<div style="position:absolute;left:411.3px;top:669.5px;width:1px;height:15.799999999999955px;background:#dcdcdc;"></div>
<svg style="position:absolute;left:415.3px;top:669.5px" width="8" height="16" viewBox="0 0 8 16"><path d="M0.5 5L4 1.5L7.5 5Z M0.5 11L4 14.5L7.5 11Z" fill="#444"/></svg>
<div style="position:absolute;left:439px;top:667.0px;height:20px;line-height:20px;font-family:'Liberation Sans', sans-serif;font-size:12px;color:#000;font-weight:400;white-space:pre;">Main Pot</div>
<div style="position:absolute;left:494.4px;top:666.5px;width:65.39999999999998px;height:21.799999999999955px;background:#f0f0f0;border:1px solid #cccccc;"></div>
<div style="position:absolute;right:775.2px;top:668.4px;height:20px;line-height:20px;font-family:'Liberation Sans', sans-serif;font-size:12px;color:#6d6d6d;font-weight:400;white-space:pre;text-align:right;">17,50</div>
<div style="position:absolute;left:542.8px;top:669.5px;width:1px;height:15.799999999999955px;background:#dcdcdc;"></div>
<svg style="position:absolute;left:546.8px;top:669.5px" width="8" height="16" viewBox="0 0 8 16"><path d="M0.5 5L4 1.5L7.5 5Z M0.5 11L4 14.5L7.5 11Z" fill="#444"/></svg>
<div style="position:absolute;left:296px;top:700.5px;height:20px;line-height:20px;font-family:'Liberation Sans', sans-serif;font-size:12px;color:#000;font-weight:400;white-space:pre;">Street</div>
<div style="position:absolute;left:363px;top:703.5px;width:14px;height:14px;border-radius:50%;border:1px solid #c4c4c4;background:#f0f0f0;"></div>
<div style="position:absolute;left:366.5px;top:707.0px;width:7px;height:7px;border-radius:50%;background:#c4c4c4;"></div>
<div style="position:absolute;left:382px;top:700.5px;height:20px;line-height:20px;font-family:'Liberation Sans', sans-serif;font-size:12px;color:#838383;font-weight:400;white-space:pre;">Flop</div>
<div style="position:absolute;left:434px;top:703.5px;width:14px;height:14px;border-radius:50%;border:1px solid #c4c4c4;background:#fff;"></div>
<div style="position:absolute;left:454px;top:700.5px;height:20px;line-height:20px;font-family:'Liberation Sans', sans-serif;font-size:12px;color:#838383;font-weight:400;white-space:pre;">Turn</div>
<div style="position:absolute;left:505.6px;top:703.5px;width:14px;height:14px;border-radius:50%;border:1px solid #c4c4c4;background:#fff;"></div>
<div style="position:absolute;left:525px;top:700.5px;height:20px;line-height:20px;font-family:'Liberation Sans', sans-serif;font-size:12px;color:#838383;font-weight:400;white-space:pre;">River</div>
<div style="position:absolute;left:581.5px;top:667.7px;height:20px;line-height:20px;font-family:'Liberation Sans', sans-serif;font-size:12px;color:#000;font-weight:400;white-space:pre;">Player1 bet sizing:</div>
<div style="position:absolute;left:581.5px;top:700.7px;height:20px;line-height:20px;font-family:'Liberation Sans', sans-serif;font-size:12px;color:#000;font-weight:400;white-space:pre;">Player2 bet sizing:</div>
<div style="position:absolute;left:705px;top:668px;width:128.29999999999995px;height:18.799999999999955px;background:#e5e5e5;border:1px solid #acacac;"></div>
<div style="position:absolute;left:818.3px;top:670px;width:1px;height:14.799999999999955px;background:#a8a8a8;"></div>
<svg style="position:absolute;left:821.8px;top:674.9px" width="8" height="5" viewBox="0 0 8 5"><path d="M0 0H8L4 4.5Z" fill="#000"/></svg>
<div style="position:absolute;left:561.65px;width:400px;top:667.4px;height:20px;line-height:20px;font-family:'Liberation Sans', sans-serif;font-size:12px;color:#000;font-weight:400;white-space:pre;text-align:center;">3B P OOP</div>
<div style="position:absolute;left:705px;top:701.5px;width:128.29999999999995px;height:18.799999999999955px;background:#e5e5e5;border:1px solid #acacac;"></div>
<div style="position:absolute;left:818.3px;top:703.5px;width:1px;height:14.799999999999955px;background:#a8a8a8;"></div>
<svg style="position:absolute;left:821.8px;top:708.4px" width="8" height="5" viewBox="0 0 8 5"><path d="M0 0H8L4 4.5Z" fill="#000"/></svg>
<div style="position:absolute;left:561.65px;width:400px;top:700.9px;height:20px;line-height:20px;font-family:'Liberation Sans', sans-serif;font-size:12px;color:#000;font-weight:400;white-space:pre;text-align:center;">3B IP 30-60pct</div>
<div style="position:absolute;left:847.3px;top:668px;width:129.30000000000007px;height:18.799999999999955px;background:#e1e1e1;border:1px solid #adadad;"></div>
<div style="position:absolute;left:711.95px;width:400px;top:667.4px;height:20px;line-height:20px;font-family:'Liberation Sans', sans-serif;font-size:12px;color:#000;font-weight:400;white-space:pre;text-align:center;">Save Tree</div>
<div style="position:absolute;left:847.3px;top:701.5px;width:129.30000000000007px;height:18.799999999999955px;background:#e1e1e1;border:1px solid #adadad;"></div>
<div style="position:absolute;left:711.95px;width:400px;top:700.9px;height:20px;line-height:20px;font-family:'Liberation Sans', sans-serif;font-size:12px;color:#000;font-weight:400;white-space:pre;text-align:center;">Clear Situation</div>
<div style="position:absolute;left:990.5px;top:668px;width:128.9000000000001px;height:18.799999999999955px;background:#e1e1e1;border:1px solid #adadad;"></div>
<div style="position:absolute;left:854.95px;width:400px;top:667.4px;height:20px;line-height:20px;font-family:'Liberation Sans', sans-serif;font-size:12px;color:#000;font-weight:400;white-space:pre;text-align:center;">Merge Same Trees</div>
<div style="position:absolute;left:990.5px;top:701.5px;width:128.9000000000001px;height:18.799999999999955px;background:#e1e1e1;border:1px solid #adadad;"></div>
<div style="position:absolute;left:854.95px;width:400px;top:700.9px;height:20px;line-height:20px;font-family:'Liberation Sans', sans-serif;font-size:12px;color:#000;font-weight:400;white-space:pre;text-align:center;">Generate Boards</div>
<div style="position:absolute;left:1132.2px;top:666.8px;width:65.20000000000005px;height:20.800000000000068px;background:#cccccc;border:1px solid #bfbfbf;"></div>
<svg style="position:absolute;left:1181.4px;top:674.7px" width="8" height="5" viewBox="0 0 8 5"><path d="M0 0H8L4 4.5Z" fill="#f4f4f4"/></svg>
<div style="position:absolute;left:1136px;top:667.2px;height:20px;line-height:20px;font-family:'Liberation Sans', sans-serif;font-size:12px;color:#838383;font-weight:400;white-space:pre;">Cash</div>
<div style="position:absolute;left:1210px;top:668px;width:74.70000000000005px;height:18.799999999999955px;background:#cccccc;border:1px solid #bfbfbf;"></div>
<div style="position:absolute;left:1047.35px;width:400px;top:667.4px;height:20px;line-height:20px;font-family:'Liberation Sans', sans-serif;font-size:12px;color:#838383;font-weight:400;white-space:pre;text-align:center;">None</div>
<div style="position:absolute;left:1131.7px;top:700.7px;height:20px;line-height:20px;font-family:'Liberation Sans', sans-serif;font-size:12px;color:#000;font-weight:400;white-space:pre;">Who is OOP:</div>
<div style="position:absolute;left:1209px;top:699.6px;width:76.40000000000009px;height:21.100000000000023px;background:#cccccc;border:1px solid #bfbfbf;"></div>
<svg style="position:absolute;left:1269.4px;top:707.6500000000001px" width="8" height="5" viewBox="0 0 8 5"><path d="M0 0H8L4 4.5Z" fill="#f4f4f4"/></svg>
<div style="position:absolute;left:1213px;top:700.1500000000001px;height:20px;line-height:20px;font-family:'Liberation Sans', sans-serif;font-size:12px;color:#838383;font-weight:400;white-space:pre;">Player1</div>
<div style="position:absolute;left:21.5px;top:755.7px;height:20px;line-height:20px;font-family:'Liberation Sans', sans-serif;font-size:12px;color:#000;font-weight:400;white-space:pre;">Range Player1</div>
<div style="position:absolute;left:21.5px;top:787.6px;height:20px;line-height:20px;font-family:'Liberation Sans', sans-serif;font-size:12px;color:#000;font-weight:400;white-space:pre;">Range Player2</div>
<div style="position:absolute;left:155px;top:756.5px;width:96.6px;height:18.700000000000045px;background:#e5e5e5;border:1px solid #acacac;"></div>
<div style="position:absolute;left:236.6px;top:758.5px;width:1px;height:14.700000000000045px;background:#a8a8a8;"></div>
<svg style="position:absolute;left:240.1px;top:763.35px" width="8" height="5" viewBox="0 0 8 5"><path d="M0 0H8L4 4.5Z" fill="#000"/></svg>
<div style="position:absolute;left:-4.199999999999989px;width:400px;top:755.85px;height:20px;line-height:20px;font-family:'Liberation Sans', sans-serif;font-size:12px;color:#000;font-weight:400;white-space:pre;text-align:center;">6.57%</div>
<div style="position:absolute;left:155px;top:788.7px;width:96.6px;height:18.799999999999955px;background:#e5e5e5;border:1px solid #acacac;"></div>
<div style="position:absolute;left:236.6px;top:790.7px;width:1px;height:14.799999999999955px;background:#a8a8a8;"></div>
<svg style="position:absolute;left:240.1px;top:795.6px" width="8" height="5" viewBox="0 0 8 5"><path d="M0 0H8L4 4.5Z" fill="#000"/></svg>
<div style="position:absolute;left:-4.199999999999989px;width:400px;top:788.1px;height:20px;line-height:20px;font-family:'Liberation Sans', sans-serif;font-size:12px;color:#000;font-weight:400;white-space:pre;text-align:center;">9.09%</div>
<div style="position:absolute;left:264.8px;top:756.5px;width:162.0px;height:18.700000000000045px;background:#e1e1e1;border:1px solid #adadad;"></div>
<div style="position:absolute;left:145.8px;width:400px;top:755.85px;height:20px;line-height:20px;font-family:'Liberation Sans', sans-serif;font-size:12px;color:#000;font-weight:400;white-space:pre;text-align:center;">Calculate Flop</div>
<div style="position:absolute;left:264.8px;top:788.7px;width:69.0px;height:18.799999999999955px;background:#e1e1e1;border:1px solid #adadad;"></div>
<div style="position:absolute;left:99.30000000000001px;width:400px;top:788.1px;height:20px;line-height:20px;font-family:'Liberation Sans', sans-serif;font-size:12px;color:#000;font-weight:400;white-space:pre;text-align:center;">Add Job</div>
<div style="position:absolute;left:347px;top:788.7px;width:79.80000000000001px;height:18.799999999999955px;background:#e1e1e1;border:1px solid #adadad;"></div>
<div style="position:absolute;left:186.89999999999998px;width:400px;top:788.1px;height:20px;line-height:20px;font-family:'Liberation Sans', sans-serif;font-size:12px;color:#000;font-weight:400;white-space:pre;text-align:center;">Round</div>
<div style="position:absolute;left:449.9px;top:755.7px;height:20px;line-height:20px;font-family:'Liberation Sans', sans-serif;font-size:12px;color:#6d6d6d;font-weight:400;white-space:pre;">Range Player1</div>
<div style="position:absolute;left:449.9px;top:787.6px;height:20px;line-height:20px;font-family:'Liberation Sans', sans-serif;font-size:12px;color:#6d6d6d;font-weight:400;white-space:pre;">Range Player2</div>
<div style="position:absolute;left:583.7px;top:756.5px;width:96.29999999999995px;height:18.700000000000045px;background:#cccccc;border:1px solid #bfbfbf;"></div>
<div style="position:absolute;left:665px;top:758.5px;width:1px;height:14.700000000000045px;background:#dcdcdc;"></div>
<svg style="position:absolute;left:668.5px;top:763.35px" width="8" height="5" viewBox="0 0 8 5"><path d="M0 0H8L4 4.5Z" fill="#f4f4f4"/></svg>
<div style="position:absolute;left:424.35px;width:400px;top:755.85px;height:20px;line-height:20px;font-family:'Liberation Sans', sans-serif;font-size:12px;color:#838383;font-weight:400;white-space:pre;text-align:center;">0.00%</div>
<div style="position:absolute;left:583.7px;top:788.7px;width:96.29999999999995px;height:18.799999999999955px;background:#cccccc;border:1px solid #bfbfbf;"></div>
<div style="position:absolute;left:665px;top:790.7px;width:1px;height:14.799999999999955px;background:#dcdcdc;"></div>
<svg style="position:absolute;left:668.5px;top:795.6px" width="8" height="5" viewBox="0 0 8 5"><path d="M0 0H8L4 4.5Z" fill="#f4f4f4"/></svg>
<div style="position:absolute;left:424.35px;width:400px;top:788.1px;height:20px;line-height:20px;font-family:'Liberation Sans', sans-serif;font-size:12px;color:#838383;font-weight:400;white-space:pre;text-align:center;">0.00%</div>
<div style="position:absolute;left:693.8px;top:756.5px;width:162.0px;height:18.700000000000045px;background:#cccccc;border:1px solid #bfbfbf;"></div>
<div style="position:absolute;left:574.8px;width:400px;top:755.85px;height:20px;line-height:20px;font-family:'Liberation Sans', sans-serif;font-size:12px;color:#838383;font-weight:400;white-space:pre;text-align:center;">Calculate Turn</div>
<div style="position:absolute;left:693.8px;top:788.7px;width:68.40000000000009px;height:18.799999999999955px;background:#cccccc;border:1px solid #bfbfbf;"></div>
<div style="position:absolute;left:747.2px;top:790.7px;width:1px;height:14.799999999999955px;background:#dcdcdc;"></div>
<svg style="position:absolute;left:750.7px;top:795.6px" width="8" height="5" viewBox="0 0 8 5"><path d="M0 0H8L4 4.5Z" fill="#f4f4f4"/></svg>
<div style="position:absolute;left:697.5px;top:788.1px;height:20px;line-height:20px;font-family:'Liberation Sans', sans-serif;font-size:12px;color:#838383;font-weight:400;white-space:pre;">Runouts</div>
<div style="position:absolute;left:776px;top:788.7px;width:79.79999999999995px;height:18.799999999999955px;background:#cccccc;border:1px solid #bfbfbf;"></div>
<div style="position:absolute;left:615.9px;width:400px;top:788.1px;height:20px;line-height:20px;font-family:'Liberation Sans', sans-serif;font-size:12px;color:#838383;font-weight:400;white-space:pre;text-align:center;">Round</div>
<div style="position:absolute;left:878.9px;top:755.7px;height:20px;line-height:20px;font-family:'Liberation Sans', sans-serif;font-size:12px;color:#6d6d6d;font-weight:400;white-space:pre;">Range Player1</div>
<div style="position:absolute;left:878.9px;top:787.6px;height:20px;line-height:20px;font-family:'Liberation Sans', sans-serif;font-size:12px;color:#6d6d6d;font-weight:400;white-space:pre;">Range Player2</div>
<div style="position:absolute;left:1012.3px;top:756.5px;width:96.70000000000005px;height:18.700000000000045px;background:#cccccc;border:1px solid #bfbfbf;"></div>
<div style="position:absolute;left:1094px;top:758.5px;width:1px;height:14.700000000000045px;background:#dcdcdc;"></div>
<svg style="position:absolute;left:1097.5px;top:763.35px" width="8" height="5" viewBox="0 0 8 5"><path d="M0 0H8L4 4.5Z" fill="#f4f4f4"/></svg>
<div style="position:absolute;left:853.1500000000001px;width:400px;top:755.85px;height:20px;line-height:20px;font-family:'Liberation Sans', sans-serif;font-size:12px;color:#838383;font-weight:400;white-space:pre;text-align:center;">0.00%</div>
<div style="position:absolute;left:1012.3px;top:788.7px;width:96.70000000000005px;height:18.799999999999955px;background:#cccccc;border:1px solid #bfbfbf;"></div>
<div style="position:absolute;left:1094px;top:790.7px;width:1px;height:14.799999999999955px;background:#dcdcdc;"></div>
<svg style="position:absolute;left:1097.5px;top:795.6px" width="8" height="5" viewBox="0 0 8 5"><path d="M0 0H8L4 4.5Z" fill="#f4f4f4"/></svg>
<div style="position:absolute;left:853.1500000000001px;width:400px;top:788.1px;height:20px;line-height:20px;font-family:'Liberation Sans', sans-serif;font-size:12px;color:#838383;font-weight:400;white-space:pre;text-align:center;">0.00%</div>
<div style="position:absolute;left:1122px;top:756.5px;width:162.9000000000001px;height:18.700000000000045px;background:#cccccc;border:1px solid #bfbfbf;"></div>
<div style="position:absolute;left:1003.45px;width:400px;top:755.85px;height:20px;line-height:20px;font-family:'Liberation Sans', sans-serif;font-size:12px;color:#838383;font-weight:400;white-space:pre;text-align:center;">Calculate River</div>
<div style="position:absolute;left:1122px;top:788.7px;width:69px;height:18.799999999999955px;background:#cccccc;border:1px solid #bfbfbf;"></div>
<div style="position:absolute;left:1176px;top:790.7px;width:1px;height:14.799999999999955px;background:#dcdcdc;"></div>
<svg style="position:absolute;left:1179.5px;top:795.6px" width="8" height="5" viewBox="0 0 8 5"><path d="M0 0H8L4 4.5Z" fill="#f4f4f4"/></svg>
<div style="position:absolute;left:1125.5px;top:788.1px;height:20px;line-height:20px;font-family:'Liberation Sans', sans-serif;font-size:12px;color:#838383;font-weight:400;white-space:pre;">Runouts</div>
<div style="position:absolute;left:1204.7px;top:788.7px;width:80.20000000000005px;height:18.799999999999955px;background:#cccccc;border:1px solid #bfbfbf;"></div>
<div style="position:absolute;left:1044.8000000000002px;width:400px;top:788.1px;height:20px;line-height:20px;font-family:'Liberation Sans', sans-serif;font-size:12px;color:#838383;font-weight:400;white-space:pre;text-align:center;">Round</div>
<div style="position:absolute;left:22.4px;top:820.7px;width:406px;height:260px;background:#fff;border:1px solid #828282;border-bottom:none;"></div>
<div style="position:absolute;left:27.5px;top:824.5px;height:20px;line-height:20px;font-family:'Liberation Sans', sans-serif;font-size:12px;color:#000;font-weight:400;white-space:pre;">Flop Actions</div>
<div style="position:absolute;left:89px;top:884px;width:339px;height:19px;background:#cce8ff;"></div>
<svg style="position:absolute;left:28px;top:851px" width="11" height="7" viewBox="0 0 11 7"><path d="M1 1L5.5 5.5L10 1" stroke="#333" fill="none" stroke-width="1.4"/></svg>
<div style="position:absolute;left:48.7px;top:846.0px;height:20px;line-height:20px;font-family:'Liberation Sans', sans-serif;font-size:12.4px;color:#000;font-weight:400;white-space:pre;">Flop Td 8h 6s [Pot: 17.50] - Nash Dist. 0.038</div>
<svg style="position:absolute;left:50px;top:870px" width="11" height="7" viewBox="0 0 11 7"><path d="M1 1L5.5 5.5L10 1" stroke="#333" fill="none" stroke-width="1.4"/></svg>
<div style="position:absolute;left:70.5px;top:865.0px;height:20px;line-height:20px;font-family:'Liberation Sans', sans-serif;font-size:12.4px;color:#000;font-weight:400;white-space:pre;">Player1 Check</div>
<div style="position:absolute;left:92.4px;top:884.0px;height:20px;line-height:20px;font-family:'Liberation Sans', sans-serif;font-size:12.4px;color:#000;font-weight:400;white-space:pre;">Player2 Check - 40.31%</div>
<svg style="position:absolute;left:74px;top:907px" width="7" height="11" viewBox="0 0 7 11"><path d="M1.2 1L5.5 5.5L1.2 10" stroke="#2a9bd8" fill="none" stroke-width="1.4"/></svg>
<div style="position:absolute;left:92.4px;top:902.6px;height:20px;line-height:20px;font-family:'Liberation Sans', sans-serif;font-size:12.4px;color:#000;font-weight:400;white-space:pre;">Player2 Bet 6.20 - 46.09%</div>
<div style="position:absolute;left:92.4px;top:921.5px;height:20px;line-height:20px;font-family:'Liberation Sans', sans-serif;font-size:12.4px;color:#000;font-weight:400;white-space:pre;">Player2 Bet 11.50 - 13.60%</div>
<svg style="position:absolute;left:75px;top:920px" width="14" height="23" viewBox="0 0 14 23"><path d="M1 1L1 18L5 14L8 21L10.5 20L7.5 13L13 13Z" fill="#fff" stroke="#000" stroke-width="1.1" stroke-linejoin="round"/></svg>
<div style="position:absolute;left:451px;top:820.7px;width:406px;height:260px;background:#f0f0f0;border:1px solid #828282;border-bottom:none;"></div>
<div style="position:absolute;left:452px;top:821.7px;width:404px;height:24.6px;background:#fff;"></div>
<div style="position:absolute;left:456.5px;top:824.5px;height:20px;line-height:20px;font-family:'Liberation Sans', sans-serif;font-size:12px;color:#6d6d6d;font-weight:400;white-space:pre;">Turn Actions</div>
<div style="position:absolute;left:879.6px;top:820.7px;width:406px;height:260px;background:#f0f0f0;border:1px solid #828282;border-bottom:none;"></div>
<div style="position:absolute;left:880.6px;top:821.7px;width:404px;height:24.6px;background:#fff;"></div>
<div style="position:absolute;left:885.1px;top:824.5px;height:20px;line-height:20px;font-family:'Liberation Sans', sans-serif;font-size:12px;color:#6d6d6d;font-weight:400;white-space:pre;">River Actions</div>
<div style="position:absolute;left:0px;top:1076px;width:1308px;height:4px;background:#fff;"></div>
</body></html>
